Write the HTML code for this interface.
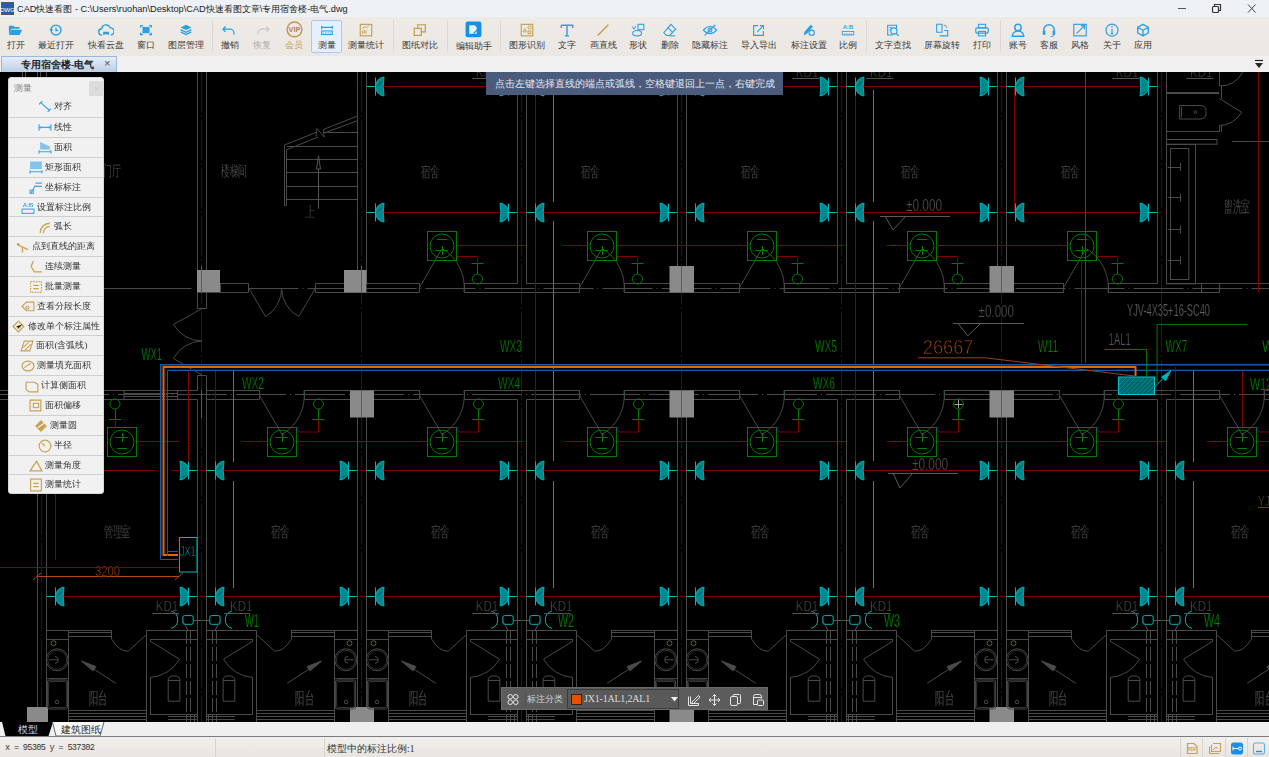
<!DOCTYPE html>
<html><head><meta charset="utf-8">
<style>
*{margin:0;padding:0;box-sizing:border-box}
html,body{width:1269px;height:757px;overflow:hidden;background:#000;font-family:"Liberation Sans",sans-serif}
#title{position:absolute;left:0;top:0;width:1269px;height:17px;background:#eef1f6;}
#title .t{position:absolute;left:17px;top:3px;font-size:9.2px;color:#222;white-space:nowrap}
#tb{position:absolute;left:0;top:17px;width:1269px;height:39px;background:linear-gradient(#eeebe7,#ebe7e2);}
#tb .lb{position:absolute;transform:translateX(-50%);font-size:9px;color:#3a3a3a;white-space:nowrap;font-family:"Liberation Serif",serif;line-height:10px}
#tb .sep{position:absolute;top:3px;width:1px;height:32px;background:#dcd8d3}
#tabs{position:absolute;left:0;top:56px;width:1269px;height:16px;background:#f0f0f0}
#tab1{position:absolute;left:1px;top:0;width:116px;height:16px;background:linear-gradient(#e6eef8,#bccfe6);border:1px solid #9ab8dc;border-bottom:none}
#tab1 .lb{position:absolute;left:19px;top:2px;font-size:9.5px;color:#222;font-weight:bold;font-family:"Liberation Serif",serif;white-space:nowrap}
#tab1 .x{position:absolute;left:102px;top:0px;font-size:11px;color:#555}
#canvas{position:absolute;left:0;top:72px;width:1269px;height:650px;background:#000;overflow:hidden;will-change:transform}
#panel{position:absolute;left:8px;top:77.3px;width:96px;height:417px;background:#f1f1f1;border-radius:3px;border:1px solid #d8d8d8}
#panel .hd{position:absolute;left:5px;top:4px;font-size:9px;color:#888}
#panel .cl{position:absolute;left:80px;top:3px;width:15px;height:15px;background:#dcdcdc;color:#c8c8c8;font-size:8px;text-align:center;line-height:15px}
#panel .row{position:absolute;left:0;width:94px;height:20px;border-top:1px solid #cfcfcf;font-size:9px;color:#333;line-height:19px;white-space:nowrap;font-family:"Liberation Serif",serif}
#btabs{position:absolute;left:0;top:722px;width:1269px;height:16px;background:#efefef}
#status{position:absolute;left:0;top:738px;width:1269px;height:19px;background:linear-gradient(#f2f0ed,#e8e4df)}
#status .t{position:absolute;top:5px;font-size:9.5px;color:#333;white-space:nowrap;font-family:"Liberation Mono",monospace}
#tip{position:absolute;left:486px;top:72px;width:297px;height:23px;background:#4b5b7c;color:#e4e8f0;font-size:10px;line-height:24px;text-align:center;font-family:"Liberation Serif",serif;white-space:nowrap}
#btool{position:absolute;left:501px;top:687px;width:267px;height:23px;background:#5c5c5c;border:1px solid #6a6a6a}
svg text{font-family:"Liberation Sans",sans-serif}
</style></head><body>
<div id="title"><svg style="position:absolute;left:1px;top:2px" width="13" height="13" viewBox="0 0 13 13"><rect x=".5" y=".5" width="12" height="12" fill="#2a5ea8" stroke="#555"/><text x="6.5" y="9.5" font-size="6" text-anchor="middle" fill="#fff" font-family="Liberation Sans">DWG</text></svg><svg style="position:absolute;left:1170px;top:1px" width="99" height="15" viewBox="0 0 99 15"><g fill="none" stroke="#333" stroke-width="1"><path d="M8 7.5H16" stroke="#555"/><rect x="42.5" y="5.5" width="6" height="6" rx="1" stroke-width="1.2"/><path d="M44.5 5V3.5H50.5V9.5H49" stroke-width="1.2"/><path d="M78 3.5L85.5 11.5M85.5 3.5L78 11.5" stroke="#444"/></g></svg><div class="t">CAD快速看图 - C:\Users\ruohan\Desktop\CAD快速看图文章\专用宿舍楼-电气.dwg</div></div>
<div id="tb">
<div style="position:absolute;left:311px;top:2.5px;width:31px;height:33px;background:#e6f0fc;border:1px solid #a9c9ee;border-radius:2px"></div>
<svg style="position:absolute;left:8.0px;top:6px" width="16" height="14.2" viewBox="0 0 18 16"><path d="M1 3h5l1.5 1.5H13v2H4L1 13z" fill="#2b9ee6"/><path d="M3.5 7.5H16L13 13.5H1z" fill="#2b9ee6"/></svg>
<div class="lb" style="left:16.0px;top:23px;color:#3a3a3a">打开</div>
<svg style="position:absolute;left:48.0px;top:6px" width="16" height="14.2" viewBox="0 0 18 16"><circle cx="9" cy="8" r="5.6" fill="none" stroke="#2b9ee6" stroke-width="1.6"/><path d="M9 5v3.5h2.5" fill="none" stroke="#2b9ee6" stroke-width="1.5"/><path d="M1.5 7l2.2 2.6L6 7z" fill="#2b9ee6"/></svg>
<div class="lb" style="left:56.0px;top:23px;color:#3a3a3a">最近打开</div>
<svg style="position:absolute;left:98.0px;top:6px" width="16" height="14.2" viewBox="0 0 18 16"><path d="M4.5 13.5a3.5 3.5 0 0 1-.4-7A5 5 0 0 1 13.8 5.5a3.8 3.8 0 0 1 .6 8" fill="none" stroke="#2b9ee6" stroke-width="1.6"/><path d="M6.5 13.5v-3h5v3M6.5 12h5" fill="none" stroke="#2b9ee6" stroke-width="1.4"/></svg>
<div class="lb" style="left:106.0px;top:23px;color:#3a3a3a">快看云盘</div>
<svg style="position:absolute;left:138.0px;top:6px" width="16" height="14.2" viewBox="0 0 18 16"><rect x="5" y="4.5" width="8" height="7" fill="#2b9ee6"/><path d="M3 5V3h2.5M12.5 3H15v2M15 11v2h-2.5M5.5 13H3v-2" fill="none" stroke="#2b9ee6" stroke-width="1.6"/></svg>
<div class="lb" style="left:146.0px;top:23px;color:#3a3a3a">窗口</div>
<svg style="position:absolute;left:178.0px;top:6px" width="16" height="14.2" viewBox="0 0 18 16"><path d="M9 2l6 3-6 3-6-3z" fill="#2b9ee6"/><path d="M3 7.5l6 3 6-3M3 10l6 3 6-3" fill="none" stroke="#2b9ee6" stroke-width="1.5"/></svg>
<div class="lb" style="left:186.0px;top:23px;color:#3a3a3a">图层管理</div>
<svg style="position:absolute;left:222.0px;top:6px" width="16" height="14.2" viewBox="0 0 18 16"><path d="M4 4l-3 3 3 3M1.5 7H9a4.5 4.5 0 0 1 4.5 4.5V13" fill="none" stroke="#2b9ee6" stroke-width="1.4"/></svg>
<div class="lb" style="left:230.0px;top:23px;color:#3a3a3a">撤销</div>
<svg style="position:absolute;left:254.0px;top:6px" width="16" height="14.2" viewBox="0 0 18 16"><path d="M14 4l3 3-3 3M16.5 7H9a4.5 4.5 0 0 0-4.5 4.5V13" fill="none" stroke="#c8c8c8" stroke-width="1.4"/></svg>
<div class="lb" style="left:262.0px;top:23px;color:#b0b0b0">恢复</div>
<svg style="position:absolute;left:284.5px;top:3.8px" width="19" height="16.9" viewBox="0 0 18 16"><circle cx="9" cy="8" r="7" fill="none" stroke="#c49a4a" stroke-width="1.4"/><text x="9" y="10.8" font-size="7" font-weight="bold" text-anchor="middle" fill="#b8862a" font-family="Liberation Serif">VIP</text></svg>
<div class="lb" style="left:294.0px;top:23px;color:#c9a060">会员</div>
<svg style="position:absolute;left:318.5px;top:6px" width="16" height="14.2" viewBox="0 0 18 16"><path d="M3 3v4M15 3v4M3 5h12" fill="none" stroke="#2b9ee6" stroke-width="1.3"/><rect x="3" y="9" width="12" height="4" fill="none" stroke="#2b9ee6" stroke-width="1.2"/><path d="M5 10.5v1.5M7 10.5v1.5M9 10.5v1.5M11 10.5v1.5M13 10.5v1.5" stroke="#2b9ee6" stroke-width=".7"/></svg>
<div class="lb" style="left:326.5px;top:23px;color:#3a3a3a">测量</div>
<svg style="position:absolute;left:358.0px;top:6px" width="16" height="14.2" viewBox="0 0 18 16"><rect x="2.5" y="1.5" width="13" height="13" fill="none" stroke="#c49a4a" stroke-width="1.2"/><path d="M5 6l2.5-2 2 1.5 3-3M5 12V9M7 12V7.5M9 12V8.5" fill="none" stroke="#c49a4a" stroke-width="1"/></svg>
<div class="lb" style="left:366.0px;top:23px;color:#3a3a3a">测量统计</div>
<svg style="position:absolute;left:412.0px;top:6px" width="16" height="14.2" viewBox="0 0 18 16"><rect x="2.5" y="6" width="8" height="8" fill="none" stroke="#c49a4a" stroke-width="1.3"/><path d="M6.5 6V2h8.5v8h-4.5" fill="none" stroke="#c49a4a" stroke-width="1.3"/></svg>
<div class="lb" style="left:420.0px;top:23px;color:#3a3a3a">图纸对比</div>
<svg style="position:absolute;left:464.0px;top:3.8px" width="19" height="16.9" viewBox="0 0 18 16"><rect x="1.5" y="0.5" width="15" height="15" rx="2" fill="#1a8fe0"/><path d="M5 4h5l2 2v6H5z" fill="#fff" opacity=".9"/><path d="M9 12l5-5" stroke="#1a8fe0" stroke-width="1.2"/></svg>
<div class="lb" style="left:473.5px;top:24px;color:#3a3a3a">编辑助手</div>
<svg style="position:absolute;left:519.0px;top:6px" width="16" height="14.2" viewBox="0 0 18 16"><rect x="2.5" y="1.5" width="13" height="13" fill="none" stroke="#c49a4a" stroke-width="1.2"/><path d="M4.5 10l2-3.5 2 3.5z" fill="none" stroke="#c49a4a" stroke-width="1"/><circle cx="12" cy="5" r="1.8" fill="none" stroke="#c49a4a" stroke-width="1"/><rect x="10.3" y="9" width="3" height="3" fill="none" stroke="#c49a4a" stroke-width="1"/></svg>
<div class="lb" style="left:527.0px;top:23px;color:#3a3a3a">图形识别</div>
<svg style="position:absolute;left:559.0px;top:6px" width="16" height="14.2" viewBox="0 0 18 16"><path d="M2.5 2.5h13v3M2.5 2.5v3M9 2.5v12M6.5 14.5h5" fill="none" stroke="#2b9ee6" stroke-width="1.6"/></svg>
<div class="lb" style="left:567.0px;top:23px;color:#3a3a3a">文字</div>
<svg style="position:absolute;left:595.0px;top:6px" width="16" height="14.2" viewBox="0 0 18 16"><path d="M3 14L15 2" stroke="#c49a4a" stroke-width="1.5"/></svg>
<div class="lb" style="left:603.0px;top:23px;color:#3a3a3a">画直线</div>
<svg style="position:absolute;left:630.0px;top:6px" width="16" height="14.2" viewBox="0 0 18 16"><rect x="9" y="1.5" width="6.5" height="6" fill="none" stroke="#2b9ee6" stroke-width="1.2"/><ellipse cx="8" cy="11.5" rx="5" ry="3" fill="none" stroke="#2b9ee6" stroke-width="1.2"/><path d="M2.5 4l2 3 2-4" fill="none" stroke="#2b9ee6" stroke-width="1.1"/></svg>
<div class="lb" style="left:638.0px;top:23px;color:#3a3a3a">形状</div>
<svg style="position:absolute;left:662.0px;top:6px" width="16" height="14.2" viewBox="0 0 18 16"><path d="M10 1.5l5.5 5.5-7 7H5L2 11z" fill="none" stroke="#2b9ee6" stroke-width="1.2"/><path d="M6.5 5l5.5 5.5" stroke="#2b9ee6" stroke-width="1.2"/><path d="M9 14.5h6" stroke="#2b9ee6" stroke-width="1.2"/></svg>
<div class="lb" style="left:670.0px;top:23px;color:#3a3a3a">删除</div>
<svg style="position:absolute;left:702.0px;top:6px" width="16" height="14.2" viewBox="0 0 18 16"><path d="M1.5 8q7.5-8 15 0q-7.5 8-15 0z" fill="none" stroke="#2b9ee6" stroke-width="1.3"/><circle cx="9" cy="8" r="2.2" fill="none" stroke="#2b9ee6" stroke-width="1.2"/><path d="M3 14L15 2" stroke="#2b9ee6" stroke-width="1.3"/></svg>
<div class="lb" style="left:710.0px;top:23px;color:#3a3a3a">隐藏标注</div>
<svg style="position:absolute;left:751.0px;top:6px" width="16" height="14.2" viewBox="0 0 18 16"><path d="M8 3H3v11h11V9" fill="none" stroke="#2b9ee6" stroke-width="1.3"/><path d="M7 10l7-7M10 3h4v4" fill="none" stroke="#2b9ee6" stroke-width="1.3"/></svg>
<div class="lb" style="left:759.0px;top:23px;color:#3a3a3a">导入导出</div>
<svg style="position:absolute;left:801.0px;top:6px" width="16" height="14.2" viewBox="0 0 18 16"><path d="M3 14l1-4 7-8 2.5 2-7 8z" fill="#2b9ee6"/><circle cx="12" cy="11" r="3" fill="none" stroke="#2b9ee6" stroke-width="1.3"/></svg>
<div class="lb" style="left:809.0px;top:23px;color:#3a3a3a">标注设置</div>
<svg style="position:absolute;left:840.0px;top:6px" width="16" height="14.2" viewBox="0 0 18 16"><text x="9" y="7" font-size="6.5" text-anchor="middle" fill="#2b9ee6" font-family="Liberation Mono" font-weight="bold">A:B</text><rect x="2.5" y="9.5" width="13" height="4" fill="none" stroke="#2b9ee6" stroke-width="1"/><path d="M5 11.5v2M7 11.5v2M9 11.5v2M11 11.5v2M13 11.5v2" stroke="#2b9ee6" stroke-width=".7"/></svg>
<div class="lb" style="left:848.0px;top:23px;color:#3a3a3a">比例</div>
<svg style="position:absolute;left:885.0px;top:6px" width="16" height="14.2" viewBox="0 0 18 16"><path d="M13 6V2.5H3v11h6" fill="none" stroke="#2b9ee6" stroke-width="1.2"/><circle cx="10" cy="9" r="3.5" fill="none" stroke="#2b9ee6" stroke-width="1.3"/><path d="M12.5 11.5l3 3" stroke="#2b9ee6" stroke-width="1.4"/><path d="M5 5h3M5 8h2" stroke="#2b9ee6" stroke-width="1"/></svg>
<div class="lb" style="left:893.0px;top:23px;color:#3a3a3a">文字查找</div>
<svg style="position:absolute;left:934.0px;top:6px" width="16" height="14.2" viewBox="0 0 18 16"><path d="M3 1.5h6v9H3z" fill="none" stroke="#2b9ee6" stroke-width="1.2"/><path d="M6.5 14.5h9v-6h-4" fill="none" stroke="#2b9ee6" stroke-width="1.2"/><path d="M11 2.5q3 0 3.5 3" fill="none" stroke="#2b9ee6" stroke-width="1"/></svg>
<div class="lb" style="left:942.0px;top:23px;color:#3a3a3a">屏幕旋转</div>
<svg style="position:absolute;left:974.0px;top:6px" width="16" height="14.2" viewBox="0 0 18 16"><rect x="5" y="1.5" width="8" height="4" fill="none" stroke="#2b9ee6" stroke-width="1.2"/><rect x="2" y="5.5" width="14" height="6" rx="1.5" fill="none" stroke="#2b9ee6" stroke-width="1.4"/><rect x="5" y="9.5" width="8" height="5" fill="none" stroke="#2b9ee6" stroke-width="1.2"/></svg>
<div class="lb" style="left:982.0px;top:23px;color:#3a3a3a">打印</div>
<svg style="position:absolute;left:1009.5px;top:6px" width="16" height="14.2" viewBox="0 0 18 16"><circle cx="9" cy="5" r="3.6" fill="none" stroke="#2b9ee6" stroke-width="1.6"/><path d="M2.5 15a6.5 6 0 0 1 13 0z" fill="none" stroke="#2b9ee6" stroke-width="1.6"/></svg>
<div class="lb" style="left:1017.5px;top:23px;color:#3a3a3a">账号</div>
<svg style="position:absolute;left:1041.0px;top:6px" width="16" height="14.2" viewBox="0 0 18 16"><path d="M3 10V8a6 6 0 0 1 12 0v2" fill="none" stroke="#2b9ee6" stroke-width="1.6"/><rect x="2" y="8.5" width="3" height="5" rx="1" fill="#2b9ee6"/><rect x="13" y="8.5" width="3" height="5" rx="1" fill="#2b9ee6"/><path d="M14.5 13.5q0 2-4 2" fill="none" stroke="#2b9ee6" stroke-width="1"/></svg>
<div class="lb" style="left:1049.0px;top:23px;color:#3a3a3a">客服</div>
<svg style="position:absolute;left:1072.0px;top:6px" width="16" height="14.2" viewBox="0 0 18 16"><rect x="2" y="1.5" width="14" height="13" fill="none" stroke="#2b9ee6" stroke-width="1.3"/><path d="M5 12L14 3M10 3h4v4" fill="none" stroke="#2b9ee6" stroke-width="1.3"/></svg>
<div class="lb" style="left:1080.0px;top:23px;color:#3a3a3a">风格</div>
<svg style="position:absolute;left:1103.6px;top:6px" width="16" height="14.2" viewBox="0 0 18 16"><circle cx="9" cy="8" r="6.8" fill="none" stroke="#2b9ee6" stroke-width="1.3"/><path d="M9 6.5v5.5M7.5 12h3" stroke="#2b9ee6" stroke-width="1.3"/><circle cx="9" cy="4.3" r=".9" fill="#2b9ee6"/></svg>
<div class="lb" style="left:1111.6px;top:23px;color:#3a3a3a">关于</div>
<svg style="position:absolute;left:1134.7px;top:6px" width="16" height="14.2" viewBox="0 0 18 16"><path d="M9 1.5l6 3.3v6.5L9 14.5 3 11.3V4.8z M3 4.8l6 3.4 6-3.4M9 8.2v6.3" fill="none" stroke="#2b9ee6" stroke-width="1.5" stroke-linejoin="round"/></svg>
<div class="lb" style="left:1142.7px;top:23px;color:#3a3a3a">应用</div>
<div class="sep" style="left:212px"></div>
<div class="sep" style="left:393px"></div>
<div class="sep" style="left:447px"></div>
<div class="sep" style="left:500px"></div>
<div class="sep" style="left:866px"></div>
<div class="sep" style="left:1000px"></div>
</div>
<div id="tabs"><div id="tab1"><span class="lb">专用宿舍楼-电气</span><span class="x">×</span></div><svg style="position:absolute;left:1254px;top:3px" width="10" height="10" viewBox="0 0 10 10"><path d="M1 1.5H9" stroke="#222" stroke-width="1.2"/><path d="M1 4H9L5 9Z" fill="#222"/></svg></div>
<div id="canvas"><svg width="1269" height="650" viewBox="0 72 1269 650" style="position:absolute;left:0;top:0">
<line x1="197.5" y1="72" x2="197.5" y2="283.5" stroke="#4a4a4a" stroke-width="1" />
<line x1="206.5" y1="72" x2="206.5" y2="283.5" stroke="#4a4a4a" stroke-width="1" />
<line x1="197.5" y1="399.5" x2="197.5" y2="722" stroke="#4a4a4a" stroke-width="1" />
<line x1="206.5" y1="399.5" x2="206.5" y2="722" stroke="#4a4a4a" stroke-width="1" />
<line x1="357.5" y1="72" x2="357.5" y2="283.5" stroke="#4a4a4a" stroke-width="1" />
<line x1="366.5" y1="72" x2="366.5" y2="283.5" stroke="#4a4a4a" stroke-width="1" />
<line x1="357.5" y1="399.5" x2="357.5" y2="722" stroke="#4a4a4a" stroke-width="1" />
<line x1="366.5" y1="399.5" x2="366.5" y2="722" stroke="#4a4a4a" stroke-width="1" />
<line x1="517.5" y1="72" x2="517.5" y2="283.5" stroke="#4a4a4a" stroke-width="1" />
<line x1="526.5" y1="72" x2="526.5" y2="283.5" stroke="#4a4a4a" stroke-width="1" />
<line x1="517.5" y1="399.5" x2="517.5" y2="722" stroke="#4a4a4a" stroke-width="1" />
<line x1="526.5" y1="399.5" x2="526.5" y2="722" stroke="#4a4a4a" stroke-width="1" />
<line x1="677.5" y1="72" x2="677.5" y2="283.5" stroke="#4a4a4a" stroke-width="1" />
<line x1="686.5" y1="72" x2="686.5" y2="283.5" stroke="#4a4a4a" stroke-width="1" />
<line x1="677.5" y1="399.5" x2="677.5" y2="722" stroke="#4a4a4a" stroke-width="1" />
<line x1="686.5" y1="399.5" x2="686.5" y2="722" stroke="#4a4a4a" stroke-width="1" />
<line x1="837.5" y1="72" x2="837.5" y2="283.5" stroke="#4a4a4a" stroke-width="1" />
<line x1="846.5" y1="72" x2="846.5" y2="283.5" stroke="#4a4a4a" stroke-width="1" />
<line x1="837.5" y1="399.5" x2="837.5" y2="722" stroke="#4a4a4a" stroke-width="1" />
<line x1="846.5" y1="399.5" x2="846.5" y2="722" stroke="#4a4a4a" stroke-width="1" />
<line x1="997.5" y1="72" x2="997.5" y2="283.5" stroke="#4a4a4a" stroke-width="1" />
<line x1="1006.5" y1="72" x2="1006.5" y2="283.5" stroke="#4a4a4a" stroke-width="1" />
<line x1="997.5" y1="399.5" x2="997.5" y2="722" stroke="#4a4a4a" stroke-width="1" />
<line x1="1006.5" y1="399.5" x2="1006.5" y2="722" stroke="#4a4a4a" stroke-width="1" />
<line x1="1157.5" y1="72" x2="1157.5" y2="283.5" stroke="#4a4a4a" stroke-width="1" />
<line x1="1166.5" y1="72" x2="1166.5" y2="283.5" stroke="#4a4a4a" stroke-width="1" />
<line x1="1157.5" y1="399.5" x2="1157.5" y2="722" stroke="#4a4a4a" stroke-width="1" />
<line x1="1166.5" y1="399.5" x2="1166.5" y2="722" stroke="#4a4a4a" stroke-width="1" />
<line x1="37.5" y1="399.5" x2="37.5" y2="722" stroke="#4a4a4a" stroke-width="1" />
<line x1="46.5" y1="399.5" x2="46.5" y2="722" stroke="#4a4a4a" stroke-width="1" />
<line x1="41.5" y1="399" x2="41.5" y2="722" stroke="#1c1c1c" stroke-width="1" stroke-dasharray="40 3 2 3"/>
<line x1="201.5" y1="72" x2="201.5" y2="722" stroke="#1c1c1c" stroke-width="1" stroke-dasharray="40 3 2 3"/>
<line x1="361.5" y1="72" x2="361.5" y2="722" stroke="#1c1c1c" stroke-width="1" stroke-dasharray="40 3 2 3"/>
<line x1="521.5" y1="72" x2="521.5" y2="722" stroke="#1c1c1c" stroke-width="1" stroke-dasharray="40 3 2 3"/>
<line x1="681.5" y1="72" x2="681.5" y2="722" stroke="#1c1c1c" stroke-width="1" stroke-dasharray="40 3 2 3"/>
<line x1="841.5" y1="72" x2="841.5" y2="722" stroke="#1c1c1c" stroke-width="1" stroke-dasharray="40 3 2 3"/>
<line x1="1001.5" y1="72" x2="1001.5" y2="722" stroke="#1c1c1c" stroke-width="1" stroke-dasharray="40 3 2 3"/>
<line x1="1161.5" y1="72" x2="1161.5" y2="722" stroke="#1c1c1c" stroke-width="1" stroke-dasharray="40 3 2 3"/>
<path d="M197.5 292.5V308.5H206.5V292.5" stroke="#4a4a4a" stroke-width="1" fill="none" />
<path d="M197.5 390.5V375.5H206.5V390.5" stroke="#4a4a4a" stroke-width="1" fill="none" />
<line x1="104" y1="288.5" x2="191.5" y2="288.5" stroke="#4a4a4a" stroke-width="1" />
<line x1="220" y1="283.5" x2="248.5" y2="283.5" stroke="#4a4a4a" stroke-width="1" />
<line x1="220" y1="292.5" x2="248.5" y2="292.5" stroke="#4a4a4a" stroke-width="1" />
<line x1="220.5" y1="283.5" x2="220.5" y2="292.5" stroke="#4a4a4a" stroke-width="1" />
<line x1="248.5" y1="283.5" x2="248.5" y2="292.5" stroke="#4a4a4a" stroke-width="1" />
<line x1="315.5" y1="283.5" x2="357.5" y2="283.5" stroke="#4a4a4a" stroke-width="1" />
<line x1="366.5" y1="283.5" x2="419.5" y2="283.5" stroke="#4a4a4a" stroke-width="1" />
<line x1="315.5" y1="292.5" x2="419.5" y2="292.5" stroke="#4a4a4a" stroke-width="1" />
<line x1="315.5" y1="283.5" x2="315.5" y2="292.5" stroke="#4a4a4a" stroke-width="1" />
<line x1="419.5" y1="283.5" x2="419.5" y2="292.5" stroke="#4a4a4a" stroke-width="1" />
<line x1="464.5" y1="283.5" x2="517.5" y2="283.5" stroke="#4a4a4a" stroke-width="1" />
<line x1="526.5" y1="283.5" x2="579.5" y2="283.5" stroke="#4a4a4a" stroke-width="1" />
<line x1="464.5" y1="292.5" x2="579.5" y2="292.5" stroke="#4a4a4a" stroke-width="1" />
<line x1="464.5" y1="283.5" x2="464.5" y2="292.5" stroke="#4a4a4a" stroke-width="1" />
<line x1="579.5" y1="283.5" x2="579.5" y2="292.5" stroke="#4a4a4a" stroke-width="1" />
<line x1="624.5" y1="283.5" x2="677.5" y2="283.5" stroke="#4a4a4a" stroke-width="1" />
<line x1="686.5" y1="283.5" x2="739.5" y2="283.5" stroke="#4a4a4a" stroke-width="1" />
<line x1="624.5" y1="292.5" x2="739.5" y2="292.5" stroke="#4a4a4a" stroke-width="1" />
<line x1="624.5" y1="283.5" x2="624.5" y2="292.5" stroke="#4a4a4a" stroke-width="1" />
<line x1="739.5" y1="283.5" x2="739.5" y2="292.5" stroke="#4a4a4a" stroke-width="1" />
<line x1="784.5" y1="283.5" x2="837.5" y2="283.5" stroke="#4a4a4a" stroke-width="1" />
<line x1="846.5" y1="283.5" x2="899.5" y2="283.5" stroke="#4a4a4a" stroke-width="1" />
<line x1="784.5" y1="292.5" x2="899.5" y2="292.5" stroke="#4a4a4a" stroke-width="1" />
<line x1="784.5" y1="283.5" x2="784.5" y2="292.5" stroke="#4a4a4a" stroke-width="1" />
<line x1="899.5" y1="283.5" x2="899.5" y2="292.5" stroke="#4a4a4a" stroke-width="1" />
<line x1="944.5" y1="283.5" x2="997.5" y2="283.5" stroke="#4a4a4a" stroke-width="1" />
<line x1="1006.5" y1="283.5" x2="1063.5" y2="283.5" stroke="#4a4a4a" stroke-width="1" />
<line x1="944.5" y1="292.5" x2="1063.5" y2="292.5" stroke="#4a4a4a" stroke-width="1" />
<line x1="944.5" y1="283.5" x2="944.5" y2="292.5" stroke="#4a4a4a" stroke-width="1" />
<line x1="1063.5" y1="283.5" x2="1063.5" y2="292.5" stroke="#4a4a4a" stroke-width="1" />
<line x1="1108.5" y1="283.5" x2="1157.5" y2="283.5" stroke="#4a4a4a" stroke-width="1" />
<line x1="1166.5" y1="283.5" x2="1219.5" y2="283.5" stroke="#4a4a4a" stroke-width="1" />
<line x1="1108.5" y1="292.5" x2="1219.5" y2="292.5" stroke="#4a4a4a" stroke-width="1" />
<line x1="1108.5" y1="283.5" x2="1108.5" y2="292.5" stroke="#4a4a4a" stroke-width="1" />
<line x1="1219.5" y1="283.5" x2="1219.5" y2="292.5" stroke="#4a4a4a" stroke-width="1" />
<line x1="248.5" y1="288.5" x2="1269" y2="288.5" stroke="#4a4a4a" stroke-width="1" stroke-dasharray="50 4 1 4"/>
<line x1="0" y1="390.5" x2="124" y2="390.5" stroke="#4a4a4a" stroke-width="1" />
<line x1="0" y1="399.5" x2="37.5" y2="399.5" stroke="#4a4a4a" stroke-width="1" />
<line x1="46.5" y1="399.5" x2="124" y2="399.5" stroke="#4a4a4a" stroke-width="1" />
<rect x="124" y="390.5" width="53.5" height="9" stroke="#4a4a4a" stroke-width="1" fill="none" />
<line x1="124" y1="393.5" x2="177.5" y2="393.5" stroke="#4a4a4a" stroke-width="1" />
<line x1="124" y1="396.5" x2="177.5" y2="396.5" stroke="#4a4a4a" stroke-width="1" />
<line x1="177.5" y1="390.5" x2="197.5" y2="390.5" stroke="#4a4a4a" stroke-width="1" />
<line x1="177.5" y1="399.5" x2="197.5" y2="399.5" stroke="#4a4a4a" stroke-width="1" />
<line x1="206.5" y1="399.5" x2="259.5" y2="399.5" stroke="#4a4a4a" stroke-width="1" />
<line x1="206.5" y1="390.5" x2="259.5" y2="390.5" stroke="#4a4a4a" stroke-width="1" />
<line x1="206.5" y1="390.5" x2="206.5" y2="399.5" stroke="#4a4a4a" stroke-width="1" />
<line x1="259.5" y1="390.5" x2="259.5" y2="399.5" stroke="#4a4a4a" stroke-width="1" />
<line x1="304.5" y1="399.5" x2="357.5" y2="399.5" stroke="#4a4a4a" stroke-width="1" />
<line x1="366.5" y1="399.5" x2="419.5" y2="399.5" stroke="#4a4a4a" stroke-width="1" />
<line x1="304.5" y1="390.5" x2="419.5" y2="390.5" stroke="#4a4a4a" stroke-width="1" />
<line x1="304.5" y1="390.5" x2="304.5" y2="399.5" stroke="#4a4a4a" stroke-width="1" />
<line x1="419.5" y1="390.5" x2="419.5" y2="399.5" stroke="#4a4a4a" stroke-width="1" />
<line x1="464.5" y1="399.5" x2="517.5" y2="399.5" stroke="#4a4a4a" stroke-width="1" />
<line x1="526.5" y1="399.5" x2="579.5" y2="399.5" stroke="#4a4a4a" stroke-width="1" />
<line x1="464.5" y1="390.5" x2="579.5" y2="390.5" stroke="#4a4a4a" stroke-width="1" />
<line x1="464.5" y1="390.5" x2="464.5" y2="399.5" stroke="#4a4a4a" stroke-width="1" />
<line x1="579.5" y1="390.5" x2="579.5" y2="399.5" stroke="#4a4a4a" stroke-width="1" />
<line x1="624.5" y1="399.5" x2="677.5" y2="399.5" stroke="#4a4a4a" stroke-width="1" />
<line x1="686.5" y1="399.5" x2="739.5" y2="399.5" stroke="#4a4a4a" stroke-width="1" />
<line x1="624.5" y1="390.5" x2="739.5" y2="390.5" stroke="#4a4a4a" stroke-width="1" />
<line x1="624.5" y1="390.5" x2="624.5" y2="399.5" stroke="#4a4a4a" stroke-width="1" />
<line x1="739.5" y1="390.5" x2="739.5" y2="399.5" stroke="#4a4a4a" stroke-width="1" />
<line x1="784.5" y1="399.5" x2="837.5" y2="399.5" stroke="#4a4a4a" stroke-width="1" />
<line x1="846.5" y1="399.5" x2="899.5" y2="399.5" stroke="#4a4a4a" stroke-width="1" />
<line x1="784.5" y1="390.5" x2="899.5" y2="390.5" stroke="#4a4a4a" stroke-width="1" />
<line x1="784.5" y1="390.5" x2="784.5" y2="399.5" stroke="#4a4a4a" stroke-width="1" />
<line x1="899.5" y1="390.5" x2="899.5" y2="399.5" stroke="#4a4a4a" stroke-width="1" />
<line x1="944.5" y1="399.5" x2="997.5" y2="399.5" stroke="#4a4a4a" stroke-width="1" />
<line x1="1006.5" y1="399.5" x2="1059.5" y2="399.5" stroke="#4a4a4a" stroke-width="1" />
<line x1="944.5" y1="390.5" x2="1059.5" y2="390.5" stroke="#4a4a4a" stroke-width="1" />
<line x1="944.5" y1="390.5" x2="944.5" y2="399.5" stroke="#4a4a4a" stroke-width="1" />
<line x1="1059.5" y1="390.5" x2="1059.5" y2="399.5" stroke="#4a4a4a" stroke-width="1" />
<line x1="1104.5" y1="399.5" x2="1157.5" y2="399.5" stroke="#4a4a4a" stroke-width="1" />
<line x1="1166.5" y1="399.5" x2="1219.5" y2="399.5" stroke="#4a4a4a" stroke-width="1" />
<line x1="1104.5" y1="390.5" x2="1219.5" y2="390.5" stroke="#4a4a4a" stroke-width="1" />
<line x1="1104.5" y1="390.5" x2="1104.5" y2="399.5" stroke="#4a4a4a" stroke-width="1" />
<line x1="1219.5" y1="390.5" x2="1219.5" y2="399.5" stroke="#4a4a4a" stroke-width="1" />
<line x1="1264.5" y1="399.5" x2="1269" y2="399.5" stroke="#4a4a4a" stroke-width="1" />
<line x1="1264.5" y1="390.5" x2="1269" y2="390.5" stroke="#4a4a4a" stroke-width="1" />
<line x1="1264.5" y1="390.5" x2="1264.5" y2="399.5" stroke="#4a4a4a" stroke-width="1" />
<line x1="1269.5" y1="390.5" x2="1269.5" y2="399.5" stroke="#4a4a4a" stroke-width="1" />
<line x1="0" y1="394.5" x2="1269" y2="394.5" stroke="#4a4a4a" stroke-width="1" stroke-dasharray="50 4 1 4"/>
<rect x="197" y="270" width="23" height="22.5" fill="#8a8a8a"/>
<rect x="344" y="270" width="22.5" height="22.5" fill="#8a8a8a"/>
<rect x="669.5" y="266" width="24.5" height="26.5" fill="#8a8a8a"/>
<rect x="989.5" y="266" width="24.5" height="26.5" fill="#8a8a8a"/>
<rect x="350" y="390.5" width="24" height="27" fill="#8a8a8a"/>
<rect x="669.5" y="390.5" width="24.5" height="27" fill="#8a8a8a"/>
<rect x="989.5" y="390.5" width="24.5" height="27" fill="#8a8a8a"/>
<rect x="27" y="707" width="21" height="15" fill="#8a8a8a"/>
<rect x="350" y="707" width="24" height="15" fill="#8a8a8a"/>
<rect x="669.5" y="707" width="24.5" height="15" fill="#8a8a8a"/>
<rect x="989.5" y="707" width="24.5" height="15" fill="#8a8a8a"/>
<line x1="201.5" y1="266" x2="201.5" y2="293" stroke="#5a5a5a" stroke-width="1" />
<line x1="201.5" y1="390" x2="201.5" y2="418" stroke="#5a5a5a" stroke-width="1" />
<line x1="361.5" y1="266" x2="361.5" y2="293" stroke="#5a5a5a" stroke-width="1" />
<line x1="361.5" y1="390" x2="361.5" y2="418" stroke="#5a5a5a" stroke-width="1" />
<line x1="681.5" y1="266" x2="681.5" y2="293" stroke="#5a5a5a" stroke-width="1" />
<line x1="681.5" y1="390" x2="681.5" y2="418" stroke="#5a5a5a" stroke-width="1" />
<line x1="1001.5" y1="266" x2="1001.5" y2="293" stroke="#5a5a5a" stroke-width="1" />
<line x1="1001.5" y1="390" x2="1001.5" y2="418" stroke="#5a5a5a" stroke-width="1" />
<path d="M249 288.5L265.6 316.6A32.6 32.6 0 0 0 281.6 288.5" stroke="#484848" stroke-width="1" fill="none" />
<path d="M315.3 288.5L298.7 316.6A32.6 32.6 0 0 1 281.6 288.5" stroke="#484848" stroke-width="1" fill="none" />
<path d="M202 308.5L173.5 324.5A33 33 0 0 0 202 341" stroke="#484848" stroke-width="1" fill="none" />
<path d="M202 375L173.5 358.5A33 33 0 0 1 202 341" stroke="#484848" stroke-width="1" fill="none" />
<line x1="419" y1="288.5" x2="442" y2="248.5" stroke="#484848" stroke-width="1" />
<path d="M442 248.5 A45 45 0 0 1 464 292.5" stroke="#484848" stroke-width="1" fill="none" />
<line x1="579" y1="288.5" x2="602" y2="248.5" stroke="#484848" stroke-width="1" />
<path d="M602 248.5 A45 45 0 0 1 624 292.5" stroke="#484848" stroke-width="1" fill="none" />
<line x1="739" y1="288.5" x2="762" y2="248.5" stroke="#484848" stroke-width="1" />
<path d="M762 248.5 A45 45 0 0 1 784 292.5" stroke="#484848" stroke-width="1" fill="none" />
<line x1="899" y1="288.5" x2="922" y2="248.5" stroke="#484848" stroke-width="1" />
<path d="M922 248.5 A45 45 0 0 1 944 292.5" stroke="#484848" stroke-width="1" fill="none" />
<line x1="1063" y1="288.5" x2="1086" y2="248.5" stroke="#484848" stroke-width="1" />
<path d="M1086 248.5 A45 45 0 0 1 1108 292.5" stroke="#484848" stroke-width="1" fill="none" />
<line x1="259" y1="394.5" x2="282" y2="434.5" stroke="#484848" stroke-width="1" />
<path d="M282 434.5 A45 45 0 0 0 304 390.5" stroke="#484848" stroke-width="1" fill="none" />
<line x1="419" y1="394.5" x2="442" y2="434.5" stroke="#484848" stroke-width="1" />
<path d="M442 434.5 A45 45 0 0 0 464 390.5" stroke="#484848" stroke-width="1" fill="none" />
<line x1="579" y1="394.5" x2="602" y2="434.5" stroke="#484848" stroke-width="1" />
<path d="M602 434.5 A45 45 0 0 0 624 390.5" stroke="#484848" stroke-width="1" fill="none" />
<line x1="739" y1="394.5" x2="762" y2="434.5" stroke="#484848" stroke-width="1" />
<path d="M762 434.5 A45 45 0 0 0 784 390.5" stroke="#484848" stroke-width="1" fill="none" />
<line x1="899" y1="394.5" x2="922" y2="434.5" stroke="#484848" stroke-width="1" />
<path d="M922 434.5 A45 45 0 0 0 944 390.5" stroke="#484848" stroke-width="1" fill="none" />
<line x1="1059" y1="394.5" x2="1082" y2="434.5" stroke="#484848" stroke-width="1" />
<path d="M1082 434.5 A45 45 0 0 0 1104 390.5" stroke="#484848" stroke-width="1" fill="none" />
<line x1="1219" y1="394.5" x2="1242" y2="434.5" stroke="#484848" stroke-width="1" />
<path d="M1242 434.5 A45 45 0 0 0 1264 390.5" stroke="#484848" stroke-width="1" fill="none" />
<line x1="287" y1="146.5" x2="357.5" y2="146.5" stroke="#4a4a4a" stroke-width="1" />
<line x1="287" y1="159.5" x2="357.5" y2="159.5" stroke="#4a4a4a" stroke-width="1" />
<line x1="287" y1="172.5" x2="357.5" y2="172.5" stroke="#4a4a4a" stroke-width="1" />
<line x1="287" y1="186.5" x2="357.5" y2="186.5" stroke="#4a4a4a" stroke-width="1" />
<line x1="287" y1="199.5" x2="357.5" y2="199.5" stroke="#4a4a4a" stroke-width="1" />
<line x1="323" y1="132.5" x2="357.5" y2="132.5" stroke="#4a4a4a" stroke-width="1" />
<path d="M284.5 145V205.5H286.5V149.8" stroke="#4a4a4a" stroke-width="1" fill="none" />
<path d="M284.5 145L317 132M323.5 129.5L357.5 116" stroke="#4a4a4a" stroke-width="1" fill="none" />
<path d="M286.5 149.8L318 137M325 132.8L357.5 120.6" stroke="#4a4a4a" stroke-width="1" fill="none" />
<path d="M316 136.5L317 128.4L324 137L323.5 129.5" stroke="#4a4a4a" stroke-width="1" fill="none" />
<line x1="318.5" y1="169" x2="318.5" y2="208.6" stroke="#555" stroke-width="1" />
<path d="M318.5 155.8L316.5 169H320.5Z" stroke="#555" stroke-width="1" fill="none" />
<text transform="translate(310 217) scale(0.7 1)" fill="#555" font-size="15" text-anchor="middle" stroke="#000" stroke-width="0.35">上</text>
<text transform="translate(234 176) scale(0.6 1)" fill="#666666" font-size="15" text-anchor="middle" stroke="#000" stroke-width="0.35">楼梯间</text>
<text transform="translate(112 176) scale(0.6 1)" fill="#666666" font-size="15" text-anchor="middle" stroke="#000" stroke-width="0.35">门厅</text>
<line x1="535.5" y1="86" x2="535.5" y2="596" stroke="#820000" stroke-width="1" />
<line x1="855.5" y1="86" x2="855.5" y2="596" stroke="#820000" stroke-width="1" />
<line x1="1014.5" y1="86" x2="1014.5" y2="212.5" stroke="#820000" stroke-width="1" />
<line x1="1081.5" y1="261" x2="1081.5" y2="364" stroke="#820000" stroke-width="1" />
<line x1="1242.5" y1="370" x2="1242.5" y2="427" stroke="#820000" stroke-width="1" />
<line x1="1175.5" y1="367" x2="1175.5" y2="596" stroke="#820000" stroke-width="1" />
<line x1="1193.5" y1="370" x2="1193.5" y2="462" stroke="#6c6c6c" stroke-width="1" />
<line x1="1193.5" y1="481" x2="1193.5" y2="588" stroke="#6c6c6c" stroke-width="1" />
<text x="1258" y="506" font-size="15.09" fill="#5a5a5a" textLength="12" lengthAdjust="spacingAndGlyphs" font-family="Liberation Sans" stroke="#000" stroke-width="0.55">YJ</text>
<line x1="1258" y1="507.5" x2="1269" y2="507.5" stroke="#007c00" stroke-width="1" />
<line x1="1258.5" y1="72" x2="1258.5" y2="292" stroke="#820000" stroke-width="1" />
<line x1="188.5" y1="370" x2="188.5" y2="462" stroke="#820000" stroke-width="1" />
<line x1="215.5" y1="370" x2="215.5" y2="596" stroke="#820000" stroke-width="1" />
<line x1="55.5" y1="490" x2="55.5" y2="560" stroke="#820000" stroke-width="1" />
<line x1="553.5" y1="90" x2="553.5" y2="202" stroke="#6c6c6c" stroke-width="1" />
<line x1="553.5" y1="221" x2="553.5" y2="461" stroke="#6c6c6c" stroke-width="1" />
<line x1="553.5" y1="481" x2="553.5" y2="588" stroke="#6c6c6c" stroke-width="1" />
<line x1="873.5" y1="90" x2="873.5" y2="202" stroke="#6c6c6c" stroke-width="1" />
<line x1="873.5" y1="221" x2="873.5" y2="461" stroke="#6c6c6c" stroke-width="1" />
<line x1="873.5" y1="481" x2="873.5" y2="588" stroke="#6c6c6c" stroke-width="1" />
<line x1="233.5" y1="370" x2="233.5" y2="462" stroke="#6c6c6c" stroke-width="1" />
<line x1="233.5" y1="481" x2="233.5" y2="588" stroke="#6c6c6c" stroke-width="1" />
<line x1="1085.5" y1="72" x2="1085.5" y2="363" stroke="#007c00" stroke-width="1" />
<line x1="382" y1="86.5" x2="500" y2="86.5" stroke="#820000" stroke-width="1" />
<path d="M384.0 77.0 A9.55 9.55 0 0 0 384.0 96.0 Q382.5 86.5 384.0 77.0Z" fill="#008a8e" stroke="#00b8c0" stroke-width=".9"/>
<line x1="375.5" y1="77.5" x2="375.5" y2="95.5" stroke="#00b4bc" stroke-width="1" />
<line x1="376.5" y1="86.5" x2="382.5" y2="81.5" stroke="#004a50" stroke-width="0.8" />
<line x1="366.5" y1="86.5" x2="375" y2="86.5" stroke="#00b4bc" stroke-width="1" />
<path d="M500.0 77.0 A9.55 9.55 0 0 1 500.0 96.0 Q501.5 86.5 500.0 77.0Z" fill="#008a8e" stroke="#00b8c0" stroke-width=".9"/>
<line x1="508.5" y1="77.5" x2="508.5" y2="95.5" stroke="#00b4bc" stroke-width="1" />
<line x1="502.5" y1="93.5" x2="506.5" y2="90.5" stroke="#004a50" stroke-width="0.8" />
<line x1="508" y1="86.5" x2="517" y2="86.5" stroke="#00b4bc" stroke-width="1" />
<line x1="382" y1="212.5" x2="500" y2="212.5" stroke="#820000" stroke-width="1" />
<path d="M384.0 203.0 A9.55 9.55 0 0 0 384.0 222.0 Q382.5 212.5 384.0 203.0Z" fill="#008a8e" stroke="#00b8c0" stroke-width=".9"/>
<line x1="375.5" y1="203.5" x2="375.5" y2="221.5" stroke="#00b4bc" stroke-width="1" />
<line x1="376.5" y1="212.5" x2="382.5" y2="207.5" stroke="#004a50" stroke-width="0.8" />
<line x1="366.5" y1="212.5" x2="375" y2="212.5" stroke="#00b4bc" stroke-width="1" />
<path d="M500.0 203.0 A9.55 9.55 0 0 1 500.0 222.0 Q501.5 212.5 500.0 203.0Z" fill="#008a8e" stroke="#00b8c0" stroke-width=".9"/>
<line x1="508.5" y1="203.5" x2="508.5" y2="221.5" stroke="#00b4bc" stroke-width="1" />
<line x1="502.5" y1="219.5" x2="506.5" y2="216.5" stroke="#004a50" stroke-width="0.8" />
<line x1="508" y1="212.5" x2="517" y2="212.5" stroke="#00b4bc" stroke-width="1" />
<line x1="542" y1="86.5" x2="660" y2="86.5" stroke="#820000" stroke-width="1" />
<path d="M544.0 77.0 A9.55 9.55 0 0 0 544.0 96.0 Q542.5 86.5 544.0 77.0Z" fill="#008a8e" stroke="#00b8c0" stroke-width=".9"/>
<line x1="535.5" y1="77.5" x2="535.5" y2="95.5" stroke="#00b4bc" stroke-width="1" />
<line x1="536.5" y1="86.5" x2="542.5" y2="81.5" stroke="#004a50" stroke-width="0.8" />
<line x1="526.5" y1="86.5" x2="535" y2="86.5" stroke="#00b4bc" stroke-width="1" />
<path d="M660.0 77.0 A9.55 9.55 0 0 1 660.0 96.0 Q661.5 86.5 660.0 77.0Z" fill="#008a8e" stroke="#00b8c0" stroke-width=".9"/>
<line x1="668.5" y1="77.5" x2="668.5" y2="95.5" stroke="#00b4bc" stroke-width="1" />
<line x1="662.5" y1="93.5" x2="666.5" y2="90.5" stroke="#004a50" stroke-width="0.8" />
<line x1="668" y1="86.5" x2="677" y2="86.5" stroke="#00b4bc" stroke-width="1" />
<line x1="542" y1="212.5" x2="660" y2="212.5" stroke="#820000" stroke-width="1" />
<path d="M544.0 203.0 A9.55 9.55 0 0 0 544.0 222.0 Q542.5 212.5 544.0 203.0Z" fill="#008a8e" stroke="#00b8c0" stroke-width=".9"/>
<line x1="535.5" y1="203.5" x2="535.5" y2="221.5" stroke="#00b4bc" stroke-width="1" />
<line x1="536.5" y1="212.5" x2="542.5" y2="207.5" stroke="#004a50" stroke-width="0.8" />
<line x1="526.5" y1="212.5" x2="535" y2="212.5" stroke="#00b4bc" stroke-width="1" />
<path d="M660.0 203.0 A9.55 9.55 0 0 1 660.0 222.0 Q661.5 212.5 660.0 203.0Z" fill="#008a8e" stroke="#00b8c0" stroke-width=".9"/>
<line x1="668.5" y1="203.5" x2="668.5" y2="221.5" stroke="#00b4bc" stroke-width="1" />
<line x1="662.5" y1="219.5" x2="666.5" y2="216.5" stroke="#004a50" stroke-width="0.8" />
<line x1="668" y1="212.5" x2="677" y2="212.5" stroke="#00b4bc" stroke-width="1" />
<line x1="702" y1="86.5" x2="820" y2="86.5" stroke="#820000" stroke-width="1" />
<path d="M704.0 77.0 A9.55 9.55 0 0 0 704.0 96.0 Q702.5 86.5 704.0 77.0Z" fill="#008a8e" stroke="#00b8c0" stroke-width=".9"/>
<line x1="695.5" y1="77.5" x2="695.5" y2="95.5" stroke="#00b4bc" stroke-width="1" />
<line x1="696.5" y1="86.5" x2="702.5" y2="81.5" stroke="#004a50" stroke-width="0.8" />
<line x1="686.5" y1="86.5" x2="695" y2="86.5" stroke="#00b4bc" stroke-width="1" />
<path d="M820.0 77.0 A9.55 9.55 0 0 1 820.0 96.0 Q821.5 86.5 820.0 77.0Z" fill="#008a8e" stroke="#00b8c0" stroke-width=".9"/>
<line x1="828.5" y1="77.5" x2="828.5" y2="95.5" stroke="#00b4bc" stroke-width="1" />
<line x1="822.5" y1="93.5" x2="826.5" y2="90.5" stroke="#004a50" stroke-width="0.8" />
<line x1="828" y1="86.5" x2="837" y2="86.5" stroke="#00b4bc" stroke-width="1" />
<line x1="702" y1="212.5" x2="820" y2="212.5" stroke="#820000" stroke-width="1" />
<path d="M704.0 203.0 A9.55 9.55 0 0 0 704.0 222.0 Q702.5 212.5 704.0 203.0Z" fill="#008a8e" stroke="#00b8c0" stroke-width=".9"/>
<line x1="695.5" y1="203.5" x2="695.5" y2="221.5" stroke="#00b4bc" stroke-width="1" />
<line x1="696.5" y1="212.5" x2="702.5" y2="207.5" stroke="#004a50" stroke-width="0.8" />
<line x1="686.5" y1="212.5" x2="695" y2="212.5" stroke="#00b4bc" stroke-width="1" />
<path d="M820.0 203.0 A9.55 9.55 0 0 1 820.0 222.0 Q821.5 212.5 820.0 203.0Z" fill="#008a8e" stroke="#00b8c0" stroke-width=".9"/>
<line x1="828.5" y1="203.5" x2="828.5" y2="221.5" stroke="#00b4bc" stroke-width="1" />
<line x1="822.5" y1="219.5" x2="826.5" y2="216.5" stroke="#004a50" stroke-width="0.8" />
<line x1="828" y1="212.5" x2="837" y2="212.5" stroke="#00b4bc" stroke-width="1" />
<line x1="862" y1="86.5" x2="980" y2="86.5" stroke="#820000" stroke-width="1" />
<path d="M864.0 77.0 A9.55 9.55 0 0 0 864.0 96.0 Q862.5 86.5 864.0 77.0Z" fill="#008a8e" stroke="#00b8c0" stroke-width=".9"/>
<line x1="855.5" y1="77.5" x2="855.5" y2="95.5" stroke="#00b4bc" stroke-width="1" />
<line x1="856.5" y1="86.5" x2="862.5" y2="81.5" stroke="#004a50" stroke-width="0.8" />
<line x1="846.5" y1="86.5" x2="855" y2="86.5" stroke="#00b4bc" stroke-width="1" />
<path d="M980.0 77.0 A9.55 9.55 0 0 1 980.0 96.0 Q981.5 86.5 980.0 77.0Z" fill="#008a8e" stroke="#00b8c0" stroke-width=".9"/>
<line x1="988.5" y1="77.5" x2="988.5" y2="95.5" stroke="#00b4bc" stroke-width="1" />
<line x1="982.5" y1="93.5" x2="986.5" y2="90.5" stroke="#004a50" stroke-width="0.8" />
<line x1="988" y1="86.5" x2="997" y2="86.5" stroke="#00b4bc" stroke-width="1" />
<line x1="862" y1="212.5" x2="980" y2="212.5" stroke="#820000" stroke-width="1" />
<path d="M864.0 203.0 A9.55 9.55 0 0 0 864.0 222.0 Q862.5 212.5 864.0 203.0Z" fill="#008a8e" stroke="#00b8c0" stroke-width=".9"/>
<line x1="855.5" y1="203.5" x2="855.5" y2="221.5" stroke="#00b4bc" stroke-width="1" />
<line x1="856.5" y1="212.5" x2="862.5" y2="207.5" stroke="#004a50" stroke-width="0.8" />
<line x1="846.5" y1="212.5" x2="855" y2="212.5" stroke="#00b4bc" stroke-width="1" />
<path d="M980.0 203.0 A9.55 9.55 0 0 1 980.0 222.0 Q981.5 212.5 980.0 203.0Z" fill="#008a8e" stroke="#00b8c0" stroke-width=".9"/>
<line x1="988.5" y1="203.5" x2="988.5" y2="221.5" stroke="#00b4bc" stroke-width="1" />
<line x1="982.5" y1="219.5" x2="986.5" y2="216.5" stroke="#004a50" stroke-width="0.8" />
<line x1="988" y1="212.5" x2="997" y2="212.5" stroke="#00b4bc" stroke-width="1" />
<line x1="1022" y1="86.5" x2="1140" y2="86.5" stroke="#820000" stroke-width="1" />
<path d="M1024.0 77.0 A9.55 9.55 0 0 0 1024.0 96.0 Q1022.5 86.5 1024.0 77.0Z" fill="#008a8e" stroke="#00b8c0" stroke-width=".9"/>
<line x1="1015.5" y1="77.5" x2="1015.5" y2="95.5" stroke="#00b4bc" stroke-width="1" />
<line x1="1016.5" y1="86.5" x2="1022.5" y2="81.5" stroke="#004a50" stroke-width="0.8" />
<line x1="1006.5" y1="86.5" x2="1015" y2="86.5" stroke="#00b4bc" stroke-width="1" />
<path d="M1140.0 77.0 A9.55 9.55 0 0 1 1140.0 96.0 Q1141.5 86.5 1140.0 77.0Z" fill="#008a8e" stroke="#00b8c0" stroke-width=".9"/>
<line x1="1148.5" y1="77.5" x2="1148.5" y2="95.5" stroke="#00b4bc" stroke-width="1" />
<line x1="1142.5" y1="93.5" x2="1146.5" y2="90.5" stroke="#004a50" stroke-width="0.8" />
<line x1="1148" y1="86.5" x2="1157" y2="86.5" stroke="#00b4bc" stroke-width="1" />
<line x1="1022" y1="212.5" x2="1140" y2="212.5" stroke="#820000" stroke-width="1" />
<path d="M1024.0 203.0 A9.55 9.55 0 0 0 1024.0 222.0 Q1022.5 212.5 1024.0 203.0Z" fill="#008a8e" stroke="#00b8c0" stroke-width=".9"/>
<line x1="1015.5" y1="203.5" x2="1015.5" y2="221.5" stroke="#00b4bc" stroke-width="1" />
<line x1="1016.5" y1="212.5" x2="1022.5" y2="207.5" stroke="#004a50" stroke-width="0.8" />
<line x1="1006.5" y1="212.5" x2="1015" y2="212.5" stroke="#00b4bc" stroke-width="1" />
<path d="M1140.0 203.0 A9.55 9.55 0 0 1 1140.0 222.0 Q1141.5 212.5 1140.0 203.0Z" fill="#008a8e" stroke="#00b8c0" stroke-width=".9"/>
<line x1="1148.5" y1="203.5" x2="1148.5" y2="221.5" stroke="#00b4bc" stroke-width="1" />
<line x1="1142.5" y1="219.5" x2="1146.5" y2="216.5" stroke="#004a50" stroke-width="0.8" />
<line x1="1148" y1="212.5" x2="1157" y2="212.5" stroke="#00b4bc" stroke-width="1" />
<line x1="222" y1="470.5" x2="340" y2="470.5" stroke="#820000" stroke-width="1" />
<path d="M224.0 461.0 A9.55 9.55 0 0 0 224.0 480.0 Q222.5 470.5 224.0 461.0Z" fill="#008a8e" stroke="#00b8c0" stroke-width=".9"/>
<line x1="215.5" y1="461.5" x2="215.5" y2="479.5" stroke="#00b4bc" stroke-width="1" />
<line x1="216.5" y1="470.5" x2="222.5" y2="465.5" stroke="#004a50" stroke-width="0.8" />
<line x1="206.5" y1="470.5" x2="215" y2="470.5" stroke="#00b4bc" stroke-width="1" />
<path d="M340.0 461.0 A9.55 9.55 0 0 1 340.0 480.0 Q341.5 470.5 340.0 461.0Z" fill="#008a8e" stroke="#00b8c0" stroke-width=".9"/>
<line x1="348.5" y1="461.5" x2="348.5" y2="479.5" stroke="#00b4bc" stroke-width="1" />
<line x1="342.5" y1="477.5" x2="346.5" y2="474.5" stroke="#004a50" stroke-width="0.8" />
<line x1="348" y1="470.5" x2="357" y2="470.5" stroke="#00b4bc" stroke-width="1" />
<line x1="222" y1="596.5" x2="340" y2="596.5" stroke="#820000" stroke-width="1" />
<path d="M224.0 587.0 A9.55 9.55 0 0 0 224.0 606.0 Q222.5 596.5 224.0 587.0Z" fill="#008a8e" stroke="#00b8c0" stroke-width=".9"/>
<line x1="215.5" y1="587.5" x2="215.5" y2="605.5" stroke="#00b4bc" stroke-width="1" />
<line x1="216.5" y1="596.5" x2="222.5" y2="591.5" stroke="#004a50" stroke-width="0.8" />
<line x1="206.5" y1="596.5" x2="215" y2="596.5" stroke="#00b4bc" stroke-width="1" />
<path d="M340.0 587.0 A9.55 9.55 0 0 1 340.0 606.0 Q341.5 596.5 340.0 587.0Z" fill="#008a8e" stroke="#00b8c0" stroke-width=".9"/>
<line x1="348.5" y1="587.5" x2="348.5" y2="605.5" stroke="#00b4bc" stroke-width="1" />
<line x1="342.5" y1="603.5" x2="346.5" y2="600.5" stroke="#004a50" stroke-width="0.8" />
<line x1="348" y1="596.5" x2="357" y2="596.5" stroke="#00b4bc" stroke-width="1" />
<line x1="382" y1="470.5" x2="500" y2="470.5" stroke="#820000" stroke-width="1" />
<path d="M384.0 461.0 A9.55 9.55 0 0 0 384.0 480.0 Q382.5 470.5 384.0 461.0Z" fill="#008a8e" stroke="#00b8c0" stroke-width=".9"/>
<line x1="375.5" y1="461.5" x2="375.5" y2="479.5" stroke="#00b4bc" stroke-width="1" />
<line x1="376.5" y1="470.5" x2="382.5" y2="465.5" stroke="#004a50" stroke-width="0.8" />
<line x1="366.5" y1="470.5" x2="375" y2="470.5" stroke="#00b4bc" stroke-width="1" />
<path d="M500.0 461.0 A9.55 9.55 0 0 1 500.0 480.0 Q501.5 470.5 500.0 461.0Z" fill="#008a8e" stroke="#00b8c0" stroke-width=".9"/>
<line x1="508.5" y1="461.5" x2="508.5" y2="479.5" stroke="#00b4bc" stroke-width="1" />
<line x1="502.5" y1="477.5" x2="506.5" y2="474.5" stroke="#004a50" stroke-width="0.8" />
<line x1="508" y1="470.5" x2="517" y2="470.5" stroke="#00b4bc" stroke-width="1" />
<line x1="382" y1="596.5" x2="500" y2="596.5" stroke="#820000" stroke-width="1" />
<path d="M384.0 587.0 A9.55 9.55 0 0 0 384.0 606.0 Q382.5 596.5 384.0 587.0Z" fill="#008a8e" stroke="#00b8c0" stroke-width=".9"/>
<line x1="375.5" y1="587.5" x2="375.5" y2="605.5" stroke="#00b4bc" stroke-width="1" />
<line x1="376.5" y1="596.5" x2="382.5" y2="591.5" stroke="#004a50" stroke-width="0.8" />
<line x1="366.5" y1="596.5" x2="375" y2="596.5" stroke="#00b4bc" stroke-width="1" />
<path d="M500.0 587.0 A9.55 9.55 0 0 1 500.0 606.0 Q501.5 596.5 500.0 587.0Z" fill="#008a8e" stroke="#00b8c0" stroke-width=".9"/>
<line x1="508.5" y1="587.5" x2="508.5" y2="605.5" stroke="#00b4bc" stroke-width="1" />
<line x1="502.5" y1="603.5" x2="506.5" y2="600.5" stroke="#004a50" stroke-width="0.8" />
<line x1="508" y1="596.5" x2="517" y2="596.5" stroke="#00b4bc" stroke-width="1" />
<line x1="542" y1="470.5" x2="660" y2="470.5" stroke="#820000" stroke-width="1" />
<path d="M544.0 461.0 A9.55 9.55 0 0 0 544.0 480.0 Q542.5 470.5 544.0 461.0Z" fill="#008a8e" stroke="#00b8c0" stroke-width=".9"/>
<line x1="535.5" y1="461.5" x2="535.5" y2="479.5" stroke="#00b4bc" stroke-width="1" />
<line x1="536.5" y1="470.5" x2="542.5" y2="465.5" stroke="#004a50" stroke-width="0.8" />
<line x1="526.5" y1="470.5" x2="535" y2="470.5" stroke="#00b4bc" stroke-width="1" />
<path d="M660.0 461.0 A9.55 9.55 0 0 1 660.0 480.0 Q661.5 470.5 660.0 461.0Z" fill="#008a8e" stroke="#00b8c0" stroke-width=".9"/>
<line x1="668.5" y1="461.5" x2="668.5" y2="479.5" stroke="#00b4bc" stroke-width="1" />
<line x1="662.5" y1="477.5" x2="666.5" y2="474.5" stroke="#004a50" stroke-width="0.8" />
<line x1="668" y1="470.5" x2="677" y2="470.5" stroke="#00b4bc" stroke-width="1" />
<line x1="542" y1="596.5" x2="660" y2="596.5" stroke="#820000" stroke-width="1" />
<path d="M544.0 587.0 A9.55 9.55 0 0 0 544.0 606.0 Q542.5 596.5 544.0 587.0Z" fill="#008a8e" stroke="#00b8c0" stroke-width=".9"/>
<line x1="535.5" y1="587.5" x2="535.5" y2="605.5" stroke="#00b4bc" stroke-width="1" />
<line x1="536.5" y1="596.5" x2="542.5" y2="591.5" stroke="#004a50" stroke-width="0.8" />
<line x1="526.5" y1="596.5" x2="535" y2="596.5" stroke="#00b4bc" stroke-width="1" />
<path d="M660.0 587.0 A9.55 9.55 0 0 1 660.0 606.0 Q661.5 596.5 660.0 587.0Z" fill="#008a8e" stroke="#00b8c0" stroke-width=".9"/>
<line x1="668.5" y1="587.5" x2="668.5" y2="605.5" stroke="#00b4bc" stroke-width="1" />
<line x1="662.5" y1="603.5" x2="666.5" y2="600.5" stroke="#004a50" stroke-width="0.8" />
<line x1="668" y1="596.5" x2="677" y2="596.5" stroke="#00b4bc" stroke-width="1" />
<line x1="702" y1="470.5" x2="820" y2="470.5" stroke="#820000" stroke-width="1" />
<path d="M704.0 461.0 A9.55 9.55 0 0 0 704.0 480.0 Q702.5 470.5 704.0 461.0Z" fill="#008a8e" stroke="#00b8c0" stroke-width=".9"/>
<line x1="695.5" y1="461.5" x2="695.5" y2="479.5" stroke="#00b4bc" stroke-width="1" />
<line x1="696.5" y1="470.5" x2="702.5" y2="465.5" stroke="#004a50" stroke-width="0.8" />
<line x1="686.5" y1="470.5" x2="695" y2="470.5" stroke="#00b4bc" stroke-width="1" />
<path d="M820.0 461.0 A9.55 9.55 0 0 1 820.0 480.0 Q821.5 470.5 820.0 461.0Z" fill="#008a8e" stroke="#00b8c0" stroke-width=".9"/>
<line x1="828.5" y1="461.5" x2="828.5" y2="479.5" stroke="#00b4bc" stroke-width="1" />
<line x1="822.5" y1="477.5" x2="826.5" y2="474.5" stroke="#004a50" stroke-width="0.8" />
<line x1="828" y1="470.5" x2="837" y2="470.5" stroke="#00b4bc" stroke-width="1" />
<line x1="702" y1="596.5" x2="820" y2="596.5" stroke="#820000" stroke-width="1" />
<path d="M704.0 587.0 A9.55 9.55 0 0 0 704.0 606.0 Q702.5 596.5 704.0 587.0Z" fill="#008a8e" stroke="#00b8c0" stroke-width=".9"/>
<line x1="695.5" y1="587.5" x2="695.5" y2="605.5" stroke="#00b4bc" stroke-width="1" />
<line x1="696.5" y1="596.5" x2="702.5" y2="591.5" stroke="#004a50" stroke-width="0.8" />
<line x1="686.5" y1="596.5" x2="695" y2="596.5" stroke="#00b4bc" stroke-width="1" />
<path d="M820.0 587.0 A9.55 9.55 0 0 1 820.0 606.0 Q821.5 596.5 820.0 587.0Z" fill="#008a8e" stroke="#00b8c0" stroke-width=".9"/>
<line x1="828.5" y1="587.5" x2="828.5" y2="605.5" stroke="#00b4bc" stroke-width="1" />
<line x1="822.5" y1="603.5" x2="826.5" y2="600.5" stroke="#004a50" stroke-width="0.8" />
<line x1="828" y1="596.5" x2="837" y2="596.5" stroke="#00b4bc" stroke-width="1" />
<line x1="862" y1="470.5" x2="980" y2="470.5" stroke="#820000" stroke-width="1" />
<path d="M864.0 461.0 A9.55 9.55 0 0 0 864.0 480.0 Q862.5 470.5 864.0 461.0Z" fill="#008a8e" stroke="#00b8c0" stroke-width=".9"/>
<line x1="855.5" y1="461.5" x2="855.5" y2="479.5" stroke="#00b4bc" stroke-width="1" />
<line x1="856.5" y1="470.5" x2="862.5" y2="465.5" stroke="#004a50" stroke-width="0.8" />
<line x1="846.5" y1="470.5" x2="855" y2="470.5" stroke="#00b4bc" stroke-width="1" />
<path d="M980.0 461.0 A9.55 9.55 0 0 1 980.0 480.0 Q981.5 470.5 980.0 461.0Z" fill="#008a8e" stroke="#00b8c0" stroke-width=".9"/>
<line x1="988.5" y1="461.5" x2="988.5" y2="479.5" stroke="#00b4bc" stroke-width="1" />
<line x1="982.5" y1="477.5" x2="986.5" y2="474.5" stroke="#004a50" stroke-width="0.8" />
<line x1="988" y1="470.5" x2="997" y2="470.5" stroke="#00b4bc" stroke-width="1" />
<line x1="862" y1="596.5" x2="980" y2="596.5" stroke="#820000" stroke-width="1" />
<path d="M864.0 587.0 A9.55 9.55 0 0 0 864.0 606.0 Q862.5 596.5 864.0 587.0Z" fill="#008a8e" stroke="#00b8c0" stroke-width=".9"/>
<line x1="855.5" y1="587.5" x2="855.5" y2="605.5" stroke="#00b4bc" stroke-width="1" />
<line x1="856.5" y1="596.5" x2="862.5" y2="591.5" stroke="#004a50" stroke-width="0.8" />
<line x1="846.5" y1="596.5" x2="855" y2="596.5" stroke="#00b4bc" stroke-width="1" />
<path d="M980.0 587.0 A9.55 9.55 0 0 1 980.0 606.0 Q981.5 596.5 980.0 587.0Z" fill="#008a8e" stroke="#00b8c0" stroke-width=".9"/>
<line x1="988.5" y1="587.5" x2="988.5" y2="605.5" stroke="#00b4bc" stroke-width="1" />
<line x1="982.5" y1="603.5" x2="986.5" y2="600.5" stroke="#004a50" stroke-width="0.8" />
<line x1="988" y1="596.5" x2="997" y2="596.5" stroke="#00b4bc" stroke-width="1" />
<line x1="1022" y1="470.5" x2="1140" y2="470.5" stroke="#820000" stroke-width="1" />
<path d="M1024.0 461.0 A9.55 9.55 0 0 0 1024.0 480.0 Q1022.5 470.5 1024.0 461.0Z" fill="#008a8e" stroke="#00b8c0" stroke-width=".9"/>
<line x1="1015.5" y1="461.5" x2="1015.5" y2="479.5" stroke="#00b4bc" stroke-width="1" />
<line x1="1016.5" y1="470.5" x2="1022.5" y2="465.5" stroke="#004a50" stroke-width="0.8" />
<line x1="1006.5" y1="470.5" x2="1015" y2="470.5" stroke="#00b4bc" stroke-width="1" />
<path d="M1140.0 461.0 A9.55 9.55 0 0 1 1140.0 480.0 Q1141.5 470.5 1140.0 461.0Z" fill="#008a8e" stroke="#00b8c0" stroke-width=".9"/>
<line x1="1148.5" y1="461.5" x2="1148.5" y2="479.5" stroke="#00b4bc" stroke-width="1" />
<line x1="1142.5" y1="477.5" x2="1146.5" y2="474.5" stroke="#004a50" stroke-width="0.8" />
<line x1="1148" y1="470.5" x2="1157" y2="470.5" stroke="#00b4bc" stroke-width="1" />
<line x1="1022" y1="596.5" x2="1140" y2="596.5" stroke="#820000" stroke-width="1" />
<path d="M1024.0 587.0 A9.55 9.55 0 0 0 1024.0 606.0 Q1022.5 596.5 1024.0 587.0Z" fill="#008a8e" stroke="#00b8c0" stroke-width=".9"/>
<line x1="1015.5" y1="587.5" x2="1015.5" y2="605.5" stroke="#00b4bc" stroke-width="1" />
<line x1="1016.5" y1="596.5" x2="1022.5" y2="591.5" stroke="#004a50" stroke-width="0.8" />
<line x1="1006.5" y1="596.5" x2="1015" y2="596.5" stroke="#00b4bc" stroke-width="1" />
<path d="M1140.0 587.0 A9.55 9.55 0 0 1 1140.0 606.0 Q1141.5 596.5 1140.0 587.0Z" fill="#008a8e" stroke="#00b8c0" stroke-width=".9"/>
<line x1="1148.5" y1="587.5" x2="1148.5" y2="605.5" stroke="#00b4bc" stroke-width="1" />
<line x1="1142.5" y1="603.5" x2="1146.5" y2="600.5" stroke="#004a50" stroke-width="0.8" />
<line x1="1148" y1="596.5" x2="1157" y2="596.5" stroke="#00b4bc" stroke-width="1" />
<line x1="1182" y1="470.5" x2="1269" y2="470.5" stroke="#820000" stroke-width="1" />
<path d="M1184.0 461.0 A9.55 9.55 0 0 0 1184.0 480.0 Q1182.5 470.5 1184.0 461.0Z" fill="#008a8e" stroke="#00b8c0" stroke-width=".9"/>
<line x1="1175.5" y1="461.5" x2="1175.5" y2="479.5" stroke="#00b4bc" stroke-width="1" />
<line x1="1176.5" y1="470.5" x2="1182.5" y2="465.5" stroke="#004a50" stroke-width="0.8" />
<line x1="1166.5" y1="470.5" x2="1175" y2="470.5" stroke="#00b4bc" stroke-width="1" />
<line x1="1182" y1="596.5" x2="1269" y2="596.5" stroke="#820000" stroke-width="1" />
<path d="M1184.0 587.0 A9.55 9.55 0 0 0 1184.0 606.0 Q1182.5 596.5 1184.0 587.0Z" fill="#008a8e" stroke="#00b8c0" stroke-width=".9"/>
<line x1="1175.5" y1="587.5" x2="1175.5" y2="605.5" stroke="#00b4bc" stroke-width="1" />
<line x1="1176.5" y1="596.5" x2="1182.5" y2="591.5" stroke="#004a50" stroke-width="0.8" />
<line x1="1166.5" y1="596.5" x2="1175" y2="596.5" stroke="#00b4bc" stroke-width="1" />
<line x1="62" y1="470.5" x2="180" y2="470.5" stroke="#820000" stroke-width="1" />
<path d="M64.0 461.0 A9.55 9.55 0 0 0 64.0 480.0 Q62.5 470.5 64.0 461.0Z" fill="#008a8e" stroke="#00b8c0" stroke-width=".9"/>
<line x1="55.5" y1="461.5" x2="55.5" y2="479.5" stroke="#00b4bc" stroke-width="1" />
<line x1="56.5" y1="470.5" x2="62.5" y2="465.5" stroke="#004a50" stroke-width="0.8" />
<line x1="46.5" y1="470.5" x2="55" y2="470.5" stroke="#00b4bc" stroke-width="1" />
<path d="M180.0 461.0 A9.55 9.55 0 0 1 180.0 480.0 Q181.5 470.5 180.0 461.0Z" fill="#008a8e" stroke="#00b8c0" stroke-width=".9"/>
<line x1="188.5" y1="461.5" x2="188.5" y2="479.5" stroke="#00b4bc" stroke-width="1" />
<line x1="182.5" y1="477.5" x2="186.5" y2="474.5" stroke="#004a50" stroke-width="0.8" />
<line x1="188" y1="470.5" x2="197" y2="470.5" stroke="#00b4bc" stroke-width="1" />
<line x1="62" y1="596.5" x2="180" y2="596.5" stroke="#820000" stroke-width="1" />
<path d="M64.0 587.0 A9.55 9.55 0 0 0 64.0 606.0 Q62.5 596.5 64.0 587.0Z" fill="#008a8e" stroke="#00b8c0" stroke-width=".9"/>
<line x1="55.5" y1="587.5" x2="55.5" y2="605.5" stroke="#00b4bc" stroke-width="1" />
<line x1="56.5" y1="596.5" x2="62.5" y2="591.5" stroke="#004a50" stroke-width="0.8" />
<line x1="46.5" y1="596.5" x2="55" y2="596.5" stroke="#00b4bc" stroke-width="1" />
<path d="M180.0 587.0 A9.55 9.55 0 0 1 180.0 606.0 Q181.5 596.5 180.0 587.0Z" fill="#008a8e" stroke="#00b8c0" stroke-width=".9"/>
<line x1="188.5" y1="587.5" x2="188.5" y2="605.5" stroke="#00b4bc" stroke-width="1" />
<line x1="182.5" y1="603.5" x2="186.5" y2="600.5" stroke="#004a50" stroke-width="0.8" />
<line x1="188" y1="596.5" x2="197" y2="596.5" stroke="#00b4bc" stroke-width="1" />
<line x1="155" y1="470.2" x2="171" y2="470.2" stroke="#000" stroke-width="2" />
<rect x="427.5" y="231.5" width="29" height="29" stroke="#007c00" stroke-width="1" fill="none" />
<circle cx="442" cy="246" r="12" fill="none" stroke="#007c00" stroke-width="1"/>
<line x1="437" y1="239.5" x2="447" y2="239.5" stroke="#007c00" stroke-width="1" />
<line x1="436" y1="250.5" x2="448" y2="250.5" stroke="#007c00" stroke-width="1" />
<line x1="442.5" y1="246" x2="442.5" y2="255" stroke="#007c00" stroke-width="1" />
<circle cx="477.5" cy="279" r="5" fill="none" stroke="#007c00" stroke-width="1"/>
<line x1="477.5" y1="274" x2="477.5" y2="263" stroke="#007c00" stroke-width="1" />
<line x1="471.5" y1="263.5" x2="483.5" y2="263.5" stroke="#007c00" stroke-width="1" />
<path d="M457 256.5H477.5V263.5" stroke="#820000" stroke-width="1" fill="none" />
<rect x="587.5" y="231.5" width="29" height="29" stroke="#007c00" stroke-width="1" fill="none" />
<circle cx="602" cy="246" r="12" fill="none" stroke="#007c00" stroke-width="1"/>
<line x1="597" y1="239.5" x2="607" y2="239.5" stroke="#007c00" stroke-width="1" />
<line x1="596" y1="250.5" x2="608" y2="250.5" stroke="#007c00" stroke-width="1" />
<line x1="602.5" y1="246" x2="602.5" y2="255" stroke="#007c00" stroke-width="1" />
<circle cx="637.5" cy="279" r="5" fill="none" stroke="#007c00" stroke-width="1"/>
<line x1="637.5" y1="274" x2="637.5" y2="263" stroke="#007c00" stroke-width="1" />
<line x1="631.5" y1="263.5" x2="643.5" y2="263.5" stroke="#007c00" stroke-width="1" />
<path d="M617 256.5H637.5V263.5" stroke="#820000" stroke-width="1" fill="none" />
<rect x="747.5" y="231.5" width="29" height="29" stroke="#007c00" stroke-width="1" fill="none" />
<circle cx="762" cy="246" r="12" fill="none" stroke="#007c00" stroke-width="1"/>
<line x1="757" y1="239.5" x2="767" y2="239.5" stroke="#007c00" stroke-width="1" />
<line x1="756" y1="250.5" x2="768" y2="250.5" stroke="#007c00" stroke-width="1" />
<line x1="762.5" y1="246" x2="762.5" y2="255" stroke="#007c00" stroke-width="1" />
<circle cx="797.5" cy="279" r="5" fill="none" stroke="#007c00" stroke-width="1"/>
<line x1="797.5" y1="274" x2="797.5" y2="263" stroke="#007c00" stroke-width="1" />
<line x1="791.5" y1="263.5" x2="803.5" y2="263.5" stroke="#007c00" stroke-width="1" />
<path d="M777 256.5H797.5V263.5" stroke="#820000" stroke-width="1" fill="none" />
<rect x="907.5" y="231.5" width="29" height="29" stroke="#007c00" stroke-width="1" fill="none" />
<circle cx="922" cy="246" r="12" fill="none" stroke="#007c00" stroke-width="1"/>
<line x1="917" y1="239.5" x2="927" y2="239.5" stroke="#007c00" stroke-width="1" />
<line x1="916" y1="250.5" x2="928" y2="250.5" stroke="#007c00" stroke-width="1" />
<line x1="922.5" y1="246" x2="922.5" y2="255" stroke="#007c00" stroke-width="1" />
<circle cx="957.5" cy="279" r="5" fill="none" stroke="#007c00" stroke-width="1"/>
<line x1="957.5" y1="274" x2="957.5" y2="263" stroke="#007c00" stroke-width="1" />
<line x1="951.5" y1="263.5" x2="963.5" y2="263.5" stroke="#007c00" stroke-width="1" />
<path d="M937 256.5H957.5V263.5" stroke="#820000" stroke-width="1" fill="none" />
<rect x="1067.5" y="231.5" width="29" height="29" stroke="#007c00" stroke-width="1" fill="none" />
<circle cx="1082" cy="246" r="12" fill="none" stroke="#007c00" stroke-width="1"/>
<line x1="1077" y1="239.5" x2="1087" y2="239.5" stroke="#007c00" stroke-width="1" />
<line x1="1076" y1="250.5" x2="1088" y2="250.5" stroke="#007c00" stroke-width="1" />
<line x1="1082.5" y1="246" x2="1082.5" y2="255" stroke="#007c00" stroke-width="1" />
<circle cx="1117.5" cy="279" r="5" fill="none" stroke="#007c00" stroke-width="1"/>
<line x1="1117.5" y1="274" x2="1117.5" y2="263" stroke="#007c00" stroke-width="1" />
<line x1="1111.5" y1="263.5" x2="1123.5" y2="263.5" stroke="#007c00" stroke-width="1" />
<path d="M1097 256.5H1117.5V263.5" stroke="#820000" stroke-width="1" fill="none" />
<rect x="267.5" y="427.5" width="29" height="29" stroke="#007c00" stroke-width="1" fill="none" />
<circle cx="282" cy="442" r="12" fill="none" stroke="#007c00" stroke-width="1"/>
<line x1="276" y1="437.5" x2="288" y2="437.5" stroke="#007c00" stroke-width="1" />
<line x1="282.5" y1="433" x2="282.5" y2="442" stroke="#007c00" stroke-width="1" />
<line x1="277" y1="448.5" x2="287" y2="448.5" stroke="#007c00" stroke-width="1" />
<circle cx="318.5" cy="404" r="5" fill="none" stroke="#007c00" stroke-width="1"/>
<line x1="318.5" y1="409" x2="318.5" y2="420" stroke="#007c00" stroke-width="1" />
<line x1="312.5" y1="419.5" x2="324.5" y2="419.5" stroke="#007c00" stroke-width="1" />
<path d="M297 432H318.5V419.5" stroke="#820000" stroke-width="1" fill="none" />
<rect x="427.5" y="427.5" width="29" height="29" stroke="#007c00" stroke-width="1" fill="none" />
<circle cx="442" cy="442" r="12" fill="none" stroke="#007c00" stroke-width="1"/>
<line x1="436" y1="437.5" x2="448" y2="437.5" stroke="#007c00" stroke-width="1" />
<line x1="442.5" y1="433" x2="442.5" y2="442" stroke="#007c00" stroke-width="1" />
<line x1="437" y1="448.5" x2="447" y2="448.5" stroke="#007c00" stroke-width="1" />
<circle cx="478.5" cy="404" r="5" fill="none" stroke="#007c00" stroke-width="1"/>
<line x1="478.5" y1="409" x2="478.5" y2="420" stroke="#007c00" stroke-width="1" />
<line x1="472.5" y1="419.5" x2="484.5" y2="419.5" stroke="#007c00" stroke-width="1" />
<path d="M457 432H478.5V419.5" stroke="#820000" stroke-width="1" fill="none" />
<rect x="587.5" y="427.5" width="29" height="29" stroke="#007c00" stroke-width="1" fill="none" />
<circle cx="602" cy="442" r="12" fill="none" stroke="#007c00" stroke-width="1"/>
<line x1="596" y1="437.5" x2="608" y2="437.5" stroke="#007c00" stroke-width="1" />
<line x1="602.5" y1="433" x2="602.5" y2="442" stroke="#007c00" stroke-width="1" />
<line x1="597" y1="448.5" x2="607" y2="448.5" stroke="#007c00" stroke-width="1" />
<circle cx="638.5" cy="404" r="5" fill="none" stroke="#007c00" stroke-width="1"/>
<line x1="638.5" y1="409" x2="638.5" y2="420" stroke="#007c00" stroke-width="1" />
<line x1="632.5" y1="419.5" x2="644.5" y2="419.5" stroke="#007c00" stroke-width="1" />
<path d="M617 432H638.5V419.5" stroke="#820000" stroke-width="1" fill="none" />
<rect x="747.5" y="427.5" width="29" height="29" stroke="#007c00" stroke-width="1" fill="none" />
<circle cx="762" cy="442" r="12" fill="none" stroke="#007c00" stroke-width="1"/>
<line x1="756" y1="437.5" x2="768" y2="437.5" stroke="#007c00" stroke-width="1" />
<line x1="762.5" y1="433" x2="762.5" y2="442" stroke="#007c00" stroke-width="1" />
<line x1="757" y1="448.5" x2="767" y2="448.5" stroke="#007c00" stroke-width="1" />
<circle cx="798.5" cy="404" r="5" fill="none" stroke="#007c00" stroke-width="1"/>
<line x1="798.5" y1="409" x2="798.5" y2="420" stroke="#007c00" stroke-width="1" />
<line x1="792.5" y1="419.5" x2="804.5" y2="419.5" stroke="#007c00" stroke-width="1" />
<path d="M777 432H798.5V419.5" stroke="#820000" stroke-width="1" fill="none" />
<rect x="907.5" y="427.5" width="29" height="29" stroke="#007c00" stroke-width="1" fill="none" />
<circle cx="922" cy="442" r="12" fill="none" stroke="#007c00" stroke-width="1"/>
<line x1="916" y1="437.5" x2="928" y2="437.5" stroke="#007c00" stroke-width="1" />
<line x1="922.5" y1="433" x2="922.5" y2="442" stroke="#007c00" stroke-width="1" />
<line x1="917" y1="448.5" x2="927" y2="448.5" stroke="#007c00" stroke-width="1" />
<circle cx="958.5" cy="404" r="5" fill="none" stroke="#007c00" stroke-width="1"/>
<line x1="954.5" y1="404.5" x2="962.5" y2="404.5" stroke="#a0a0a0" stroke-width="1" />
<line x1="958.5" y1="400" x2="958.5" y2="408" stroke="#a0a0a0" stroke-width="1" />
<line x1="958.5" y1="409" x2="958.5" y2="420" stroke="#007c00" stroke-width="1" />
<line x1="952.5" y1="419.5" x2="964.5" y2="419.5" stroke="#007c00" stroke-width="1" />
<path d="M937 432H958.5V419.5" stroke="#820000" stroke-width="1" fill="none" />
<rect x="1067.5" y="427.5" width="29" height="29" stroke="#007c00" stroke-width="1" fill="none" />
<circle cx="1082" cy="442" r="12" fill="none" stroke="#007c00" stroke-width="1"/>
<line x1="1076" y1="437.5" x2="1088" y2="437.5" stroke="#007c00" stroke-width="1" />
<line x1="1082.5" y1="433" x2="1082.5" y2="442" stroke="#007c00" stroke-width="1" />
<line x1="1077" y1="448.5" x2="1087" y2="448.5" stroke="#007c00" stroke-width="1" />
<circle cx="1118.5" cy="404" r="5" fill="none" stroke="#007c00" stroke-width="1"/>
<line x1="1118.5" y1="409" x2="1118.5" y2="420" stroke="#007c00" stroke-width="1" />
<line x1="1112.5" y1="419.5" x2="1124.5" y2="419.5" stroke="#007c00" stroke-width="1" />
<path d="M1097 432H1118.5V419.5" stroke="#820000" stroke-width="1" fill="none" />
<rect x="1227.5" y="427.5" width="29" height="29" stroke="#007c00" stroke-width="1" fill="none" />
<circle cx="1242" cy="442" r="12" fill="none" stroke="#007c00" stroke-width="1"/>
<line x1="1236" y1="437.5" x2="1248" y2="437.5" stroke="#007c00" stroke-width="1" />
<line x1="1242.5" y1="433" x2="1242.5" y2="442" stroke="#007c00" stroke-width="1" />
<line x1="1237" y1="448.5" x2="1247" y2="448.5" stroke="#007c00" stroke-width="1" />
<circle cx="1278.5" cy="404" r="5" fill="none" stroke="#007c00" stroke-width="1"/>
<line x1="1278.5" y1="409" x2="1278.5" y2="420" stroke="#007c00" stroke-width="1" />
<line x1="1272.5" y1="419.5" x2="1284.5" y2="419.5" stroke="#007c00" stroke-width="1" />
<path d="M1257 432H1278.5V419.5" stroke="#820000" stroke-width="1" fill="none" />
<rect x="107.5" y="427.5" width="29" height="29" stroke="#007c00" stroke-width="1" fill="none" />
<circle cx="122" cy="442" r="12" fill="none" stroke="#007c00" stroke-width="1"/>
<line x1="116" y1="437.5" x2="128" y2="437.5" stroke="#007c00" stroke-width="1" />
<line x1="122.5" y1="433" x2="122.5" y2="442" stroke="#007c00" stroke-width="1" />
<line x1="117" y1="448.5" x2="127" y2="448.5" stroke="#007c00" stroke-width="1" />
<circle cx="115" cy="404" r="5" fill="none" stroke="#007c00" stroke-width="1"/>
<line x1="115.5" y1="409" x2="115.5" y2="420" stroke="#007c00" stroke-width="1" />
<line x1="109" y1="419.5" x2="121" y2="419.5" stroke="#007c00" stroke-width="1" />
<line x1="115.5" y1="419.5" x2="115.5" y2="427" stroke="#820000" stroke-width="1" />
<line x1="457" y1="245.5" x2="525" y2="245.5" stroke="#820000" stroke-width="1" />
<line x1="564" y1="245.5" x2="587" y2="245.5" stroke="#820000" stroke-width="1" />
<line x1="617" y1="245.5" x2="747" y2="245.5" stroke="#820000" stroke-width="1" />
<line x1="777" y1="245.5" x2="843" y2="245.5" stroke="#820000" stroke-width="1" />
<line x1="887" y1="245.5" x2="907" y2="245.5" stroke="#820000" stroke-width="1" />
<line x1="936" y1="245.5" x2="1067" y2="245.5" stroke="#820000" stroke-width="1" />
<line x1="137" y1="441.5" x2="180" y2="441.5" stroke="#820000" stroke-width="1" />
<line x1="242" y1="441.5" x2="267" y2="441.5" stroke="#820000" stroke-width="1" />
<line x1="297" y1="441.5" x2="427" y2="441.5" stroke="#820000" stroke-width="1" />
<line x1="457" y1="441.5" x2="523" y2="441.5" stroke="#820000" stroke-width="1" />
<line x1="564" y1="441.5" x2="587" y2="441.5" stroke="#820000" stroke-width="1" />
<line x1="617" y1="441.5" x2="747" y2="441.5" stroke="#820000" stroke-width="1" />
<line x1="777" y1="441.5" x2="846" y2="441.5" stroke="#820000" stroke-width="1" />
<line x1="887" y1="441.5" x2="907" y2="441.5" stroke="#820000" stroke-width="1" />
<line x1="937" y1="441.5" x2="1067" y2="441.5" stroke="#820000" stroke-width="1" />
<line x1="1097" y1="441.5" x2="1165" y2="441.5" stroke="#820000" stroke-width="1" />
<line x1="1207" y1="441.5" x2="1227" y2="441.5" stroke="#820000" stroke-width="1" />
<line x1="1257" y1="441.5" x2="1269" y2="441.5" stroke="#820000" stroke-width="1" />
<g><line x1="46" y1="630.5" x2="111.8" y2="630.5" stroke="#4a4a4a" stroke-width="1" /><line x1="68.4" y1="632.5" x2="111.8" y2="632.5" stroke="#4a4a4a" stroke-width="1" /><line x1="68.4" y1="636.5" x2="111.8" y2="636.5" stroke="#4a4a4a" stroke-width="1" /><line x1="46" y1="639.5" x2="68.4" y2="639.5" stroke="#4a4a4a" stroke-width="1" /><line x1="68.5" y1="630" x2="68.5" y2="722" stroke="#4a4a4a" stroke-width="1" /><line x1="111.5" y1="630" x2="111.5" y2="639.3" stroke="#4a4a4a" stroke-width="1" /><path d="M111.8 639.3Q119 651.5 128.3 651.2L145.8 635.1" stroke="#4a4a4a" stroke-width="1" fill="none"/><path d="M46 678.6H68.4" stroke="#4a4a4a" stroke-width="1" fill="none"/><circle cx="57.19999999999999" cy="659.8" r="11" fill="none" stroke="#4a4a4a"/><circle cx="57.19999999999999" cy="659.8" r="9.5" fill="none" stroke="#333"/><path d="M49 659.8H58M55 656.5A3.3 3.3 0 0 1 55 663.1" stroke="#4a4a4a" stroke-width="1" fill="none"/><circle cx="53.5" cy="643.2" r="2.5" fill="none" stroke="#4a6a30"/><rect x="47.400000000000006" y="680" width="20.2" height="29" rx="2" fill="none" stroke="#4a4a4a"/><rect x="48.599999999999994" y="681.5" width="17.8" height="26" rx="1.5" fill="none" stroke="#333"/><circle cx="57" cy="702" r="1.8" fill="none" stroke="#4a4a4a"/><path d="M115.9 683.3L81.5 661.1" stroke="#4a4a4a" stroke-width="1" fill="none"/><path d="M81.5 661.1L96 666.5L93 671Z" stroke="#4a4a4a" stroke-width="1" fill="#4a4a4a"/><line x1="68.4" y1="710.5" x2="146.3" y2="710.5" stroke="#4a4a4a" stroke-width="1" /><line x1="68.4" y1="713.5" x2="146.3" y2="713.5" stroke="#4a4a4a" stroke-width="1" /><line x1="68.4" y1="716.5" x2="146.3" y2="716.5" stroke="#4a4a4a" stroke-width="1" /><line x1="68.4" y1="719.5" x2="146.3" y2="719.5" stroke="#4a4a4a" stroke-width="1" /><line x1="146.3" y1="630.5" x2="197" y2="630.5" stroke="#4a4a4a" stroke-width="1" /><line x1="146.5" y1="630.6" x2="146.5" y2="722" stroke="#4a4a4a" stroke-width="1" /><line x1="150.5" y1="639.6" x2="150.5" y2="641" stroke="#4a4a4a" stroke-width="1" /><line x1="150.5" y1="677.5" x2="150.5" y2="714" stroke="#4a4a4a" stroke-width="1" /><line x1="150" y1="639.5" x2="197" y2="639.5" stroke="#4a4a4a" stroke-width="1" /><line x1="150" y1="714.5" x2="197" y2="714.5" stroke="#4a4a4a" stroke-width="1" /><path d="M150 641L179.5 659.2A36.5 36.5 0 0 1 150 677.5" stroke="#4a4a4a" stroke-width="1" fill="none"/><path d="M168.2 701.2V680Q168.2 675.9 174.05 675.9Q179.9 675.9 179.9 680V701.2Z" fill="none" stroke="#4a4a4a"/><line x1="168.2" y1="680.5" x2="179.9" y2="680.5" stroke="#4a4a4a" stroke-width="1" /><line x1="186.5" y1="630" x2="186.5" y2="722" stroke="#4a4a4a" stroke-width="1" stroke-dasharray="14 3"/><line x1="190.5" y1="630" x2="190.5" y2="722" stroke="#4a4a4a" stroke-width="1" stroke-dasharray="14 3"/><line x1="168.2" y1="716.5" x2="197" y2="716.5" stroke="#4a4a4a" stroke-width="1" /><line x1="168.2" y1="719.5" x2="197" y2="719.5" stroke="#4a4a4a" stroke-width="1" /><line x1="190.5" y1="714" x2="190.5" y2="722" stroke="#4a4a4a" stroke-width="1" /><line x1="194.5" y1="714" x2="194.5" y2="722" stroke="#4a4a4a" stroke-width="1" /><path d="M171 611A9 9 0 0 1 171 628.4" stroke="#00b4bc" stroke-width="1" fill="none"/><rect x="182.9" y="615.6" width="10.3" height="8.7" rx="1.5" fill="none" stroke="#00b4bc"/><line x1="193.2" y1="620.5" x2="201.5" y2="620.5" stroke="#555" stroke-width="1" /><path d="M183 621L188.2 631" stroke="#555" stroke-width="1" fill="none"/><line x1="152.4" y1="613.5" x2="179.0" y2="613.5" stroke="#555" stroke-width="1" /></g>
<g transform="translate(403 0) scale(-1 1)"><line x1="46" y1="630.5" x2="111.8" y2="630.5" stroke="#4a4a4a" stroke-width="1" /><line x1="68.4" y1="632.5" x2="111.8" y2="632.5" stroke="#4a4a4a" stroke-width="1" /><line x1="68.4" y1="636.5" x2="111.8" y2="636.5" stroke="#4a4a4a" stroke-width="1" /><line x1="46" y1="639.5" x2="68.4" y2="639.5" stroke="#4a4a4a" stroke-width="1" /><line x1="68.5" y1="630" x2="68.5" y2="722" stroke="#4a4a4a" stroke-width="1" /><line x1="111.5" y1="630" x2="111.5" y2="639.3" stroke="#4a4a4a" stroke-width="1" /><path d="M111.8 639.3Q119 651.5 128.3 651.2L145.8 635.1" stroke="#4a4a4a" stroke-width="1" fill="none"/><path d="M46 678.6H68.4" stroke="#4a4a4a" stroke-width="1" fill="none"/><circle cx="57.19999999999999" cy="659.8" r="11" fill="none" stroke="#4a4a4a"/><circle cx="57.19999999999999" cy="659.8" r="9.5" fill="none" stroke="#333"/><path d="M49 659.8H58M55 656.5A3.3 3.3 0 0 1 55 663.1" stroke="#4a4a4a" stroke-width="1" fill="none"/><circle cx="53.5" cy="643.2" r="2.5" fill="none" stroke="#4a6a30"/><rect x="47.400000000000006" y="680" width="20.2" height="29" rx="2" fill="none" stroke="#4a4a4a"/><rect x="48.599999999999994" y="681.5" width="17.8" height="26" rx="1.5" fill="none" stroke="#333"/><circle cx="57" cy="702" r="1.8" fill="none" stroke="#4a4a4a"/><path d="M115.9 683.3L81.5 661.1" stroke="#4a4a4a" stroke-width="1" fill="none"/><path d="M81.5 661.1L96 666.5L93 671Z" stroke="#4a4a4a" stroke-width="1" fill="#4a4a4a"/><line x1="68.4" y1="710.5" x2="146.3" y2="710.5" stroke="#4a4a4a" stroke-width="1" /><line x1="68.4" y1="713.5" x2="146.3" y2="713.5" stroke="#4a4a4a" stroke-width="1" /><line x1="68.4" y1="716.5" x2="146.3" y2="716.5" stroke="#4a4a4a" stroke-width="1" /><line x1="68.4" y1="719.5" x2="146.3" y2="719.5" stroke="#4a4a4a" stroke-width="1" /><line x1="146.3" y1="630.5" x2="197" y2="630.5" stroke="#4a4a4a" stroke-width="1" /><line x1="146.5" y1="630.6" x2="146.5" y2="722" stroke="#4a4a4a" stroke-width="1" /><line x1="150.5" y1="639.6" x2="150.5" y2="641" stroke="#4a4a4a" stroke-width="1" /><line x1="150.5" y1="677.5" x2="150.5" y2="714" stroke="#4a4a4a" stroke-width="1" /><line x1="150" y1="639.5" x2="197" y2="639.5" stroke="#4a4a4a" stroke-width="1" /><line x1="150" y1="714.5" x2="197" y2="714.5" stroke="#4a4a4a" stroke-width="1" /><path d="M150 641L179.5 659.2A36.5 36.5 0 0 1 150 677.5" stroke="#4a4a4a" stroke-width="1" fill="none"/><path d="M168.2 701.2V680Q168.2 675.9 174.05 675.9Q179.9 675.9 179.9 680V701.2Z" fill="none" stroke="#4a4a4a"/><line x1="168.2" y1="680.5" x2="179.9" y2="680.5" stroke="#4a4a4a" stroke-width="1" /><line x1="186.5" y1="630" x2="186.5" y2="722" stroke="#4a4a4a" stroke-width="1" stroke-dasharray="14 3"/><line x1="190.5" y1="630" x2="190.5" y2="722" stroke="#4a4a4a" stroke-width="1" stroke-dasharray="14 3"/><line x1="168.2" y1="716.5" x2="197" y2="716.5" stroke="#4a4a4a" stroke-width="1" /><line x1="168.2" y1="719.5" x2="197" y2="719.5" stroke="#4a4a4a" stroke-width="1" /><line x1="190.5" y1="714" x2="190.5" y2="722" stroke="#4a4a4a" stroke-width="1" /><line x1="194.5" y1="714" x2="194.5" y2="722" stroke="#4a4a4a" stroke-width="1" /><path d="M171 611A9 9 0 0 1 171 628.4" stroke="#00b4bc" stroke-width="1" fill="none"/><rect x="182.9" y="615.6" width="10.3" height="8.7" rx="1.5" fill="none" stroke="#00b4bc"/><line x1="193.2" y1="620.5" x2="201.5" y2="620.5" stroke="#555" stroke-width="1" /><path d="M183 621L188.2 631" stroke="#555" stroke-width="1" fill="none"/><line x1="152.4" y1="613.5" x2="179.0" y2="613.5" stroke="#555" stroke-width="1" /></g>
<text x="155.8" y="611" font-size="13.72" fill="#666" textLength="22.4" lengthAdjust="spacingAndGlyphs" font-family="Liberation Sans" stroke="#000" stroke-width="0.55">KD1</text>
<text x="230" y="611" font-size="13.72" fill="#666" textLength="22.4" lengthAdjust="spacingAndGlyphs" font-family="Liberation Sans" stroke="#000" stroke-width="0.55">KD1</text>
<g><line x1="366" y1="630.5" x2="431.8" y2="630.5" stroke="#4a4a4a" stroke-width="1" /><line x1="388.4" y1="632.5" x2="431.8" y2="632.5" stroke="#4a4a4a" stroke-width="1" /><line x1="388.4" y1="636.5" x2="431.8" y2="636.5" stroke="#4a4a4a" stroke-width="1" /><line x1="366" y1="639.5" x2="388.4" y2="639.5" stroke="#4a4a4a" stroke-width="1" /><line x1="388.5" y1="630" x2="388.5" y2="722" stroke="#4a4a4a" stroke-width="1" /><line x1="431.5" y1="630" x2="431.5" y2="639.3" stroke="#4a4a4a" stroke-width="1" /><path d="M431.8 639.3Q439 651.5 448.3 651.2L465.8 635.1" stroke="#4a4a4a" stroke-width="1" fill="none"/><path d="M366 678.6H388.4" stroke="#4a4a4a" stroke-width="1" fill="none"/><circle cx="377.2" cy="659.8" r="11" fill="none" stroke="#4a4a4a"/><circle cx="377.2" cy="659.8" r="9.5" fill="none" stroke="#333"/><path d="M369 659.8H378M375 656.5A3.3 3.3 0 0 1 375 663.1" stroke="#4a4a4a" stroke-width="1" fill="none"/><circle cx="373.5" cy="643.2" r="2.5" fill="none" stroke="#4a6a30"/><rect x="367.4" y="680" width="20.2" height="29" rx="2" fill="none" stroke="#4a4a4a"/><rect x="368.6" y="681.5" width="17.8" height="26" rx="1.5" fill="none" stroke="#333"/><circle cx="377" cy="702" r="1.8" fill="none" stroke="#4a4a4a"/><path d="M435.9 683.3L401.5 661.1" stroke="#4a4a4a" stroke-width="1" fill="none"/><path d="M401.5 661.1L416 666.5L413 671Z" stroke="#4a4a4a" stroke-width="1" fill="#4a4a4a"/><line x1="388.4" y1="710.5" x2="466.3" y2="710.5" stroke="#4a4a4a" stroke-width="1" /><line x1="388.4" y1="713.5" x2="466.3" y2="713.5" stroke="#4a4a4a" stroke-width="1" /><line x1="388.4" y1="716.5" x2="466.3" y2="716.5" stroke="#4a4a4a" stroke-width="1" /><line x1="388.4" y1="719.5" x2="466.3" y2="719.5" stroke="#4a4a4a" stroke-width="1" /><line x1="466.3" y1="630.5" x2="517" y2="630.5" stroke="#4a4a4a" stroke-width="1" /><line x1="466.5" y1="630.6" x2="466.5" y2="722" stroke="#4a4a4a" stroke-width="1" /><line x1="470.5" y1="639.6" x2="470.5" y2="641" stroke="#4a4a4a" stroke-width="1" /><line x1="470.5" y1="677.5" x2="470.5" y2="714" stroke="#4a4a4a" stroke-width="1" /><line x1="470" y1="639.5" x2="517" y2="639.5" stroke="#4a4a4a" stroke-width="1" /><line x1="470" y1="714.5" x2="517" y2="714.5" stroke="#4a4a4a" stroke-width="1" /><path d="M470 641L499.5 659.2A36.5 36.5 0 0 1 470 677.5" stroke="#4a4a4a" stroke-width="1" fill="none"/><path d="M488.2 701.2V680Q488.2 675.9 494.05 675.9Q499.9 675.9 499.9 680V701.2Z" fill="none" stroke="#4a4a4a"/><line x1="488.2" y1="680.5" x2="499.9" y2="680.5" stroke="#4a4a4a" stroke-width="1" /><line x1="506.5" y1="630" x2="506.5" y2="722" stroke="#4a4a4a" stroke-width="1" stroke-dasharray="14 3"/><line x1="510.5" y1="630" x2="510.5" y2="722" stroke="#4a4a4a" stroke-width="1" stroke-dasharray="14 3"/><line x1="488.2" y1="716.5" x2="517" y2="716.5" stroke="#4a4a4a" stroke-width="1" /><line x1="488.2" y1="719.5" x2="517" y2="719.5" stroke="#4a4a4a" stroke-width="1" /><line x1="510.5" y1="714" x2="510.5" y2="722" stroke="#4a4a4a" stroke-width="1" /><line x1="514.5" y1="714" x2="514.5" y2="722" stroke="#4a4a4a" stroke-width="1" /><path d="M491 611A9 9 0 0 1 491 628.4" stroke="#00b4bc" stroke-width="1" fill="none"/><rect x="502.9" y="615.6" width="10.3" height="8.7" rx="1.5" fill="none" stroke="#00b4bc"/><line x1="513.2" y1="620.5" x2="521.5" y2="620.5" stroke="#555" stroke-width="1" /><path d="M503 621L508.2 631" stroke="#555" stroke-width="1" fill="none"/><line x1="472.40000000000003" y1="613.5" x2="499.0" y2="613.5" stroke="#555" stroke-width="1" /></g>
<g transform="translate(1043 0) scale(-1 1)"><line x1="366" y1="630.5" x2="431.8" y2="630.5" stroke="#4a4a4a" stroke-width="1" /><line x1="388.4" y1="632.5" x2="431.8" y2="632.5" stroke="#4a4a4a" stroke-width="1" /><line x1="388.4" y1="636.5" x2="431.8" y2="636.5" stroke="#4a4a4a" stroke-width="1" /><line x1="366" y1="639.5" x2="388.4" y2="639.5" stroke="#4a4a4a" stroke-width="1" /><line x1="388.5" y1="630" x2="388.5" y2="722" stroke="#4a4a4a" stroke-width="1" /><line x1="431.5" y1="630" x2="431.5" y2="639.3" stroke="#4a4a4a" stroke-width="1" /><path d="M431.8 639.3Q439 651.5 448.3 651.2L465.8 635.1" stroke="#4a4a4a" stroke-width="1" fill="none"/><path d="M366 678.6H388.4" stroke="#4a4a4a" stroke-width="1" fill="none"/><circle cx="377.2" cy="659.8" r="11" fill="none" stroke="#4a4a4a"/><circle cx="377.2" cy="659.8" r="9.5" fill="none" stroke="#333"/><path d="M369 659.8H378M375 656.5A3.3 3.3 0 0 1 375 663.1" stroke="#4a4a4a" stroke-width="1" fill="none"/><circle cx="373.5" cy="643.2" r="2.5" fill="none" stroke="#4a6a30"/><rect x="367.4" y="680" width="20.2" height="29" rx="2" fill="none" stroke="#4a4a4a"/><rect x="368.6" y="681.5" width="17.8" height="26" rx="1.5" fill="none" stroke="#333"/><circle cx="377" cy="702" r="1.8" fill="none" stroke="#4a4a4a"/><path d="M435.9 683.3L401.5 661.1" stroke="#4a4a4a" stroke-width="1" fill="none"/><path d="M401.5 661.1L416 666.5L413 671Z" stroke="#4a4a4a" stroke-width="1" fill="#4a4a4a"/><line x1="388.4" y1="710.5" x2="466.3" y2="710.5" stroke="#4a4a4a" stroke-width="1" /><line x1="388.4" y1="713.5" x2="466.3" y2="713.5" stroke="#4a4a4a" stroke-width="1" /><line x1="388.4" y1="716.5" x2="466.3" y2="716.5" stroke="#4a4a4a" stroke-width="1" /><line x1="388.4" y1="719.5" x2="466.3" y2="719.5" stroke="#4a4a4a" stroke-width="1" /><line x1="466.3" y1="630.5" x2="517" y2="630.5" stroke="#4a4a4a" stroke-width="1" /><line x1="466.5" y1="630.6" x2="466.5" y2="722" stroke="#4a4a4a" stroke-width="1" /><line x1="470.5" y1="639.6" x2="470.5" y2="641" stroke="#4a4a4a" stroke-width="1" /><line x1="470.5" y1="677.5" x2="470.5" y2="714" stroke="#4a4a4a" stroke-width="1" /><line x1="470" y1="639.5" x2="517" y2="639.5" stroke="#4a4a4a" stroke-width="1" /><line x1="470" y1="714.5" x2="517" y2="714.5" stroke="#4a4a4a" stroke-width="1" /><path d="M470 641L499.5 659.2A36.5 36.5 0 0 1 470 677.5" stroke="#4a4a4a" stroke-width="1" fill="none"/><path d="M488.2 701.2V680Q488.2 675.9 494.05 675.9Q499.9 675.9 499.9 680V701.2Z" fill="none" stroke="#4a4a4a"/><line x1="488.2" y1="680.5" x2="499.9" y2="680.5" stroke="#4a4a4a" stroke-width="1" /><line x1="506.5" y1="630" x2="506.5" y2="722" stroke="#4a4a4a" stroke-width="1" stroke-dasharray="14 3"/><line x1="510.5" y1="630" x2="510.5" y2="722" stroke="#4a4a4a" stroke-width="1" stroke-dasharray="14 3"/><line x1="488.2" y1="716.5" x2="517" y2="716.5" stroke="#4a4a4a" stroke-width="1" /><line x1="488.2" y1="719.5" x2="517" y2="719.5" stroke="#4a4a4a" stroke-width="1" /><line x1="510.5" y1="714" x2="510.5" y2="722" stroke="#4a4a4a" stroke-width="1" /><line x1="514.5" y1="714" x2="514.5" y2="722" stroke="#4a4a4a" stroke-width="1" /><path d="M491 611A9 9 0 0 1 491 628.4" stroke="#00b4bc" stroke-width="1" fill="none"/><rect x="502.9" y="615.6" width="10.3" height="8.7" rx="1.5" fill="none" stroke="#00b4bc"/><line x1="513.2" y1="620.5" x2="521.5" y2="620.5" stroke="#555" stroke-width="1" /><path d="M503 621L508.2 631" stroke="#555" stroke-width="1" fill="none"/><line x1="472.40000000000003" y1="613.5" x2="499.0" y2="613.5" stroke="#555" stroke-width="1" /></g>
<text x="475.8" y="611" font-size="13.72" fill="#666" textLength="22.4" lengthAdjust="spacingAndGlyphs" font-family="Liberation Sans" stroke="#000" stroke-width="0.55">KD1</text>
<text x="550" y="611" font-size="13.72" fill="#666" textLength="22.4" lengthAdjust="spacingAndGlyphs" font-family="Liberation Sans" stroke="#000" stroke-width="0.55">KD1</text>
<g><line x1="686" y1="630.5" x2="751.8" y2="630.5" stroke="#4a4a4a" stroke-width="1" /><line x1="708.4" y1="632.5" x2="751.8" y2="632.5" stroke="#4a4a4a" stroke-width="1" /><line x1="708.4" y1="636.5" x2="751.8" y2="636.5" stroke="#4a4a4a" stroke-width="1" /><line x1="686" y1="639.5" x2="708.4" y2="639.5" stroke="#4a4a4a" stroke-width="1" /><line x1="708.5" y1="630" x2="708.5" y2="722" stroke="#4a4a4a" stroke-width="1" /><line x1="751.5" y1="630" x2="751.5" y2="639.3" stroke="#4a4a4a" stroke-width="1" /><path d="M751.8 639.3Q759 651.5 768.3 651.2L785.8 635.1" stroke="#4a4a4a" stroke-width="1" fill="none"/><path d="M686 678.6H708.4" stroke="#4a4a4a" stroke-width="1" fill="none"/><circle cx="697.2" cy="659.8" r="11" fill="none" stroke="#4a4a4a"/><circle cx="697.2" cy="659.8" r="9.5" fill="none" stroke="#333"/><path d="M689 659.8H698M695 656.5A3.3 3.3 0 0 1 695 663.1" stroke="#4a4a4a" stroke-width="1" fill="none"/><circle cx="693.5" cy="643.2" r="2.5" fill="none" stroke="#4a6a30"/><rect x="687.4" y="680" width="20.2" height="29" rx="2" fill="none" stroke="#4a4a4a"/><rect x="688.6" y="681.5" width="17.8" height="26" rx="1.5" fill="none" stroke="#333"/><circle cx="697" cy="702" r="1.8" fill="none" stroke="#4a4a4a"/><path d="M755.9 683.3L721.5 661.1" stroke="#4a4a4a" stroke-width="1" fill="none"/><path d="M721.5 661.1L736 666.5L733 671Z" stroke="#4a4a4a" stroke-width="1" fill="#4a4a4a"/><line x1="708.4" y1="710.5" x2="786.3" y2="710.5" stroke="#4a4a4a" stroke-width="1" /><line x1="708.4" y1="713.5" x2="786.3" y2="713.5" stroke="#4a4a4a" stroke-width="1" /><line x1="708.4" y1="716.5" x2="786.3" y2="716.5" stroke="#4a4a4a" stroke-width="1" /><line x1="708.4" y1="719.5" x2="786.3" y2="719.5" stroke="#4a4a4a" stroke-width="1" /><line x1="786.3" y1="630.5" x2="837" y2="630.5" stroke="#4a4a4a" stroke-width="1" /><line x1="786.5" y1="630.6" x2="786.5" y2="722" stroke="#4a4a4a" stroke-width="1" /><line x1="790.5" y1="639.6" x2="790.5" y2="641" stroke="#4a4a4a" stroke-width="1" /><line x1="790.5" y1="677.5" x2="790.5" y2="714" stroke="#4a4a4a" stroke-width="1" /><line x1="790" y1="639.5" x2="837" y2="639.5" stroke="#4a4a4a" stroke-width="1" /><line x1="790" y1="714.5" x2="837" y2="714.5" stroke="#4a4a4a" stroke-width="1" /><path d="M790 641L819.5 659.2A36.5 36.5 0 0 1 790 677.5" stroke="#4a4a4a" stroke-width="1" fill="none"/><path d="M808.2 701.2V680Q808.2 675.9 814.05 675.9Q819.9 675.9 819.9 680V701.2Z" fill="none" stroke="#4a4a4a"/><line x1="808.2" y1="680.5" x2="819.9" y2="680.5" stroke="#4a4a4a" stroke-width="1" /><line x1="826.5" y1="630" x2="826.5" y2="722" stroke="#4a4a4a" stroke-width="1" stroke-dasharray="14 3"/><line x1="830.5" y1="630" x2="830.5" y2="722" stroke="#4a4a4a" stroke-width="1" stroke-dasharray="14 3"/><line x1="808.2" y1="716.5" x2="837" y2="716.5" stroke="#4a4a4a" stroke-width="1" /><line x1="808.2" y1="719.5" x2="837" y2="719.5" stroke="#4a4a4a" stroke-width="1" /><line x1="830.5" y1="714" x2="830.5" y2="722" stroke="#4a4a4a" stroke-width="1" /><line x1="834.5" y1="714" x2="834.5" y2="722" stroke="#4a4a4a" stroke-width="1" /><path d="M811 611A9 9 0 0 1 811 628.4" stroke="#00b4bc" stroke-width="1" fill="none"/><rect x="822.9" y="615.6" width="10.3" height="8.7" rx="1.5" fill="none" stroke="#00b4bc"/><line x1="833.2" y1="620.5" x2="841.5" y2="620.5" stroke="#555" stroke-width="1" /><path d="M823 621L828.2 631" stroke="#555" stroke-width="1" fill="none"/><line x1="792.4" y1="613.5" x2="819.0" y2="613.5" stroke="#555" stroke-width="1" /></g>
<g transform="translate(1683 0) scale(-1 1)"><line x1="686" y1="630.5" x2="751.8" y2="630.5" stroke="#4a4a4a" stroke-width="1" /><line x1="708.4" y1="632.5" x2="751.8" y2="632.5" stroke="#4a4a4a" stroke-width="1" /><line x1="708.4" y1="636.5" x2="751.8" y2="636.5" stroke="#4a4a4a" stroke-width="1" /><line x1="686" y1="639.5" x2="708.4" y2="639.5" stroke="#4a4a4a" stroke-width="1" /><line x1="708.5" y1="630" x2="708.5" y2="722" stroke="#4a4a4a" stroke-width="1" /><line x1="751.5" y1="630" x2="751.5" y2="639.3" stroke="#4a4a4a" stroke-width="1" /><path d="M751.8 639.3Q759 651.5 768.3 651.2L785.8 635.1" stroke="#4a4a4a" stroke-width="1" fill="none"/><path d="M686 678.6H708.4" stroke="#4a4a4a" stroke-width="1" fill="none"/><circle cx="697.2" cy="659.8" r="11" fill="none" stroke="#4a4a4a"/><circle cx="697.2" cy="659.8" r="9.5" fill="none" stroke="#333"/><path d="M689 659.8H698M695 656.5A3.3 3.3 0 0 1 695 663.1" stroke="#4a4a4a" stroke-width="1" fill="none"/><circle cx="693.5" cy="643.2" r="2.5" fill="none" stroke="#4a6a30"/><rect x="687.4" y="680" width="20.2" height="29" rx="2" fill="none" stroke="#4a4a4a"/><rect x="688.6" y="681.5" width="17.8" height="26" rx="1.5" fill="none" stroke="#333"/><circle cx="697" cy="702" r="1.8" fill="none" stroke="#4a4a4a"/><path d="M755.9 683.3L721.5 661.1" stroke="#4a4a4a" stroke-width="1" fill="none"/><path d="M721.5 661.1L736 666.5L733 671Z" stroke="#4a4a4a" stroke-width="1" fill="#4a4a4a"/><line x1="708.4" y1="710.5" x2="786.3" y2="710.5" stroke="#4a4a4a" stroke-width="1" /><line x1="708.4" y1="713.5" x2="786.3" y2="713.5" stroke="#4a4a4a" stroke-width="1" /><line x1="708.4" y1="716.5" x2="786.3" y2="716.5" stroke="#4a4a4a" stroke-width="1" /><line x1="708.4" y1="719.5" x2="786.3" y2="719.5" stroke="#4a4a4a" stroke-width="1" /><line x1="786.3" y1="630.5" x2="837" y2="630.5" stroke="#4a4a4a" stroke-width="1" /><line x1="786.5" y1="630.6" x2="786.5" y2="722" stroke="#4a4a4a" stroke-width="1" /><line x1="790.5" y1="639.6" x2="790.5" y2="641" stroke="#4a4a4a" stroke-width="1" /><line x1="790.5" y1="677.5" x2="790.5" y2="714" stroke="#4a4a4a" stroke-width="1" /><line x1="790" y1="639.5" x2="837" y2="639.5" stroke="#4a4a4a" stroke-width="1" /><line x1="790" y1="714.5" x2="837" y2="714.5" stroke="#4a4a4a" stroke-width="1" /><path d="M790 641L819.5 659.2A36.5 36.5 0 0 1 790 677.5" stroke="#4a4a4a" stroke-width="1" fill="none"/><path d="M808.2 701.2V680Q808.2 675.9 814.05 675.9Q819.9 675.9 819.9 680V701.2Z" fill="none" stroke="#4a4a4a"/><line x1="808.2" y1="680.5" x2="819.9" y2="680.5" stroke="#4a4a4a" stroke-width="1" /><line x1="826.5" y1="630" x2="826.5" y2="722" stroke="#4a4a4a" stroke-width="1" stroke-dasharray="14 3"/><line x1="830.5" y1="630" x2="830.5" y2="722" stroke="#4a4a4a" stroke-width="1" stroke-dasharray="14 3"/><line x1="808.2" y1="716.5" x2="837" y2="716.5" stroke="#4a4a4a" stroke-width="1" /><line x1="808.2" y1="719.5" x2="837" y2="719.5" stroke="#4a4a4a" stroke-width="1" /><line x1="830.5" y1="714" x2="830.5" y2="722" stroke="#4a4a4a" stroke-width="1" /><line x1="834.5" y1="714" x2="834.5" y2="722" stroke="#4a4a4a" stroke-width="1" /><path d="M811 611A9 9 0 0 1 811 628.4" stroke="#00b4bc" stroke-width="1" fill="none"/><rect x="822.9" y="615.6" width="10.3" height="8.7" rx="1.5" fill="none" stroke="#00b4bc"/><line x1="833.2" y1="620.5" x2="841.5" y2="620.5" stroke="#555" stroke-width="1" /><path d="M823 621L828.2 631" stroke="#555" stroke-width="1" fill="none"/><line x1="792.4" y1="613.5" x2="819.0" y2="613.5" stroke="#555" stroke-width="1" /></g>
<text x="795.8" y="611" font-size="13.72" fill="#666" textLength="22.4" lengthAdjust="spacingAndGlyphs" font-family="Liberation Sans" stroke="#000" stroke-width="0.55">KD1</text>
<text x="870" y="611" font-size="13.72" fill="#666" textLength="22.4" lengthAdjust="spacingAndGlyphs" font-family="Liberation Sans" stroke="#000" stroke-width="0.55">KD1</text>
<g><line x1="1006" y1="630.5" x2="1071.8" y2="630.5" stroke="#4a4a4a" stroke-width="1" /><line x1="1028.4" y1="632.5" x2="1071.8" y2="632.5" stroke="#4a4a4a" stroke-width="1" /><line x1="1028.4" y1="636.5" x2="1071.8" y2="636.5" stroke="#4a4a4a" stroke-width="1" /><line x1="1006" y1="639.5" x2="1028.4" y2="639.5" stroke="#4a4a4a" stroke-width="1" /><line x1="1028.5" y1="630" x2="1028.5" y2="722" stroke="#4a4a4a" stroke-width="1" /><line x1="1071.5" y1="630" x2="1071.5" y2="639.3" stroke="#4a4a4a" stroke-width="1" /><path d="M1071.8 639.3Q1079 651.5 1088.3 651.2L1105.8 635.1" stroke="#4a4a4a" stroke-width="1" fill="none"/><path d="M1006 678.6H1028.4" stroke="#4a4a4a" stroke-width="1" fill="none"/><circle cx="1017.2" cy="659.8" r="11" fill="none" stroke="#4a4a4a"/><circle cx="1017.2" cy="659.8" r="9.5" fill="none" stroke="#333"/><path d="M1009 659.8H1018M1015 656.5A3.3 3.3 0 0 1 1015 663.1" stroke="#4a4a4a" stroke-width="1" fill="none"/><circle cx="1013.5" cy="643.2" r="2.5" fill="none" stroke="#4a6a30"/><rect x="1007.4" y="680" width="20.2" height="29" rx="2" fill="none" stroke="#4a4a4a"/><rect x="1008.6" y="681.5" width="17.8" height="26" rx="1.5" fill="none" stroke="#333"/><circle cx="1017" cy="702" r="1.8" fill="none" stroke="#4a4a4a"/><path d="M1075.9 683.3L1041.5 661.1" stroke="#4a4a4a" stroke-width="1" fill="none"/><path d="M1041.5 661.1L1056 666.5L1053 671Z" stroke="#4a4a4a" stroke-width="1" fill="#4a4a4a"/><line x1="1028.4" y1="710.5" x2="1106.3" y2="710.5" stroke="#4a4a4a" stroke-width="1" /><line x1="1028.4" y1="713.5" x2="1106.3" y2="713.5" stroke="#4a4a4a" stroke-width="1" /><line x1="1028.4" y1="716.5" x2="1106.3" y2="716.5" stroke="#4a4a4a" stroke-width="1" /><line x1="1028.4" y1="719.5" x2="1106.3" y2="719.5" stroke="#4a4a4a" stroke-width="1" /><line x1="1106.3" y1="630.5" x2="1157" y2="630.5" stroke="#4a4a4a" stroke-width="1" /><line x1="1106.5" y1="630.6" x2="1106.5" y2="722" stroke="#4a4a4a" stroke-width="1" /><line x1="1110.5" y1="639.6" x2="1110.5" y2="641" stroke="#4a4a4a" stroke-width="1" /><line x1="1110.5" y1="677.5" x2="1110.5" y2="714" stroke="#4a4a4a" stroke-width="1" /><line x1="1110" y1="639.5" x2="1157" y2="639.5" stroke="#4a4a4a" stroke-width="1" /><line x1="1110" y1="714.5" x2="1157" y2="714.5" stroke="#4a4a4a" stroke-width="1" /><path d="M1110 641L1139.5 659.2A36.5 36.5 0 0 1 1110 677.5" stroke="#4a4a4a" stroke-width="1" fill="none"/><path d="M1128.2 701.2V680Q1128.2 675.9 1134.05 675.9Q1139.9 675.9 1139.9 680V701.2Z" fill="none" stroke="#4a4a4a"/><line x1="1128.2" y1="680.5" x2="1139.9" y2="680.5" stroke="#4a4a4a" stroke-width="1" /><line x1="1146.5" y1="630" x2="1146.5" y2="722" stroke="#4a4a4a" stroke-width="1" stroke-dasharray="14 3"/><line x1="1150.5" y1="630" x2="1150.5" y2="722" stroke="#4a4a4a" stroke-width="1" stroke-dasharray="14 3"/><line x1="1128.2" y1="716.5" x2="1157" y2="716.5" stroke="#4a4a4a" stroke-width="1" /><line x1="1128.2" y1="719.5" x2="1157" y2="719.5" stroke="#4a4a4a" stroke-width="1" /><line x1="1150.5" y1="714" x2="1150.5" y2="722" stroke="#4a4a4a" stroke-width="1" /><line x1="1154.5" y1="714" x2="1154.5" y2="722" stroke="#4a4a4a" stroke-width="1" /><path d="M1131 611A9 9 0 0 1 1131 628.4" stroke="#00b4bc" stroke-width="1" fill="none"/><rect x="1142.9" y="615.6" width="10.3" height="8.7" rx="1.5" fill="none" stroke="#00b4bc"/><line x1="1153.2" y1="620.5" x2="1161.5" y2="620.5" stroke="#555" stroke-width="1" /><path d="M1143 621L1148.2 631" stroke="#555" stroke-width="1" fill="none"/><line x1="1112.3999999999999" y1="613.5" x2="1139.0" y2="613.5" stroke="#555" stroke-width="1" /></g>
<g transform="translate(2323 0) scale(-1 1)"><line x1="1006" y1="630.5" x2="1071.8" y2="630.5" stroke="#4a4a4a" stroke-width="1" /><line x1="1028.4" y1="632.5" x2="1071.8" y2="632.5" stroke="#4a4a4a" stroke-width="1" /><line x1="1028.4" y1="636.5" x2="1071.8" y2="636.5" stroke="#4a4a4a" stroke-width="1" /><line x1="1006" y1="639.5" x2="1028.4" y2="639.5" stroke="#4a4a4a" stroke-width="1" /><line x1="1028.5" y1="630" x2="1028.5" y2="722" stroke="#4a4a4a" stroke-width="1" /><line x1="1071.5" y1="630" x2="1071.5" y2="639.3" stroke="#4a4a4a" stroke-width="1" /><path d="M1071.8 639.3Q1079 651.5 1088.3 651.2L1105.8 635.1" stroke="#4a4a4a" stroke-width="1" fill="none"/><path d="M1006 678.6H1028.4" stroke="#4a4a4a" stroke-width="1" fill="none"/><circle cx="1017.2" cy="659.8" r="11" fill="none" stroke="#4a4a4a"/><circle cx="1017.2" cy="659.8" r="9.5" fill="none" stroke="#333"/><path d="M1009 659.8H1018M1015 656.5A3.3 3.3 0 0 1 1015 663.1" stroke="#4a4a4a" stroke-width="1" fill="none"/><circle cx="1013.5" cy="643.2" r="2.5" fill="none" stroke="#4a6a30"/><rect x="1007.4" y="680" width="20.2" height="29" rx="2" fill="none" stroke="#4a4a4a"/><rect x="1008.6" y="681.5" width="17.8" height="26" rx="1.5" fill="none" stroke="#333"/><circle cx="1017" cy="702" r="1.8" fill="none" stroke="#4a4a4a"/><path d="M1075.9 683.3L1041.5 661.1" stroke="#4a4a4a" stroke-width="1" fill="none"/><path d="M1041.5 661.1L1056 666.5L1053 671Z" stroke="#4a4a4a" stroke-width="1" fill="#4a4a4a"/><line x1="1028.4" y1="710.5" x2="1106.3" y2="710.5" stroke="#4a4a4a" stroke-width="1" /><line x1="1028.4" y1="713.5" x2="1106.3" y2="713.5" stroke="#4a4a4a" stroke-width="1" /><line x1="1028.4" y1="716.5" x2="1106.3" y2="716.5" stroke="#4a4a4a" stroke-width="1" /><line x1="1028.4" y1="719.5" x2="1106.3" y2="719.5" stroke="#4a4a4a" stroke-width="1" /><line x1="1106.3" y1="630.5" x2="1157" y2="630.5" stroke="#4a4a4a" stroke-width="1" /><line x1="1106.5" y1="630.6" x2="1106.5" y2="722" stroke="#4a4a4a" stroke-width="1" /><line x1="1110.5" y1="639.6" x2="1110.5" y2="641" stroke="#4a4a4a" stroke-width="1" /><line x1="1110.5" y1="677.5" x2="1110.5" y2="714" stroke="#4a4a4a" stroke-width="1" /><line x1="1110" y1="639.5" x2="1157" y2="639.5" stroke="#4a4a4a" stroke-width="1" /><line x1="1110" y1="714.5" x2="1157" y2="714.5" stroke="#4a4a4a" stroke-width="1" /><path d="M1110 641L1139.5 659.2A36.5 36.5 0 0 1 1110 677.5" stroke="#4a4a4a" stroke-width="1" fill="none"/><path d="M1128.2 701.2V680Q1128.2 675.9 1134.05 675.9Q1139.9 675.9 1139.9 680V701.2Z" fill="none" stroke="#4a4a4a"/><line x1="1128.2" y1="680.5" x2="1139.9" y2="680.5" stroke="#4a4a4a" stroke-width="1" /><line x1="1146.5" y1="630" x2="1146.5" y2="722" stroke="#4a4a4a" stroke-width="1" stroke-dasharray="14 3"/><line x1="1150.5" y1="630" x2="1150.5" y2="722" stroke="#4a4a4a" stroke-width="1" stroke-dasharray="14 3"/><line x1="1128.2" y1="716.5" x2="1157" y2="716.5" stroke="#4a4a4a" stroke-width="1" /><line x1="1128.2" y1="719.5" x2="1157" y2="719.5" stroke="#4a4a4a" stroke-width="1" /><line x1="1150.5" y1="714" x2="1150.5" y2="722" stroke="#4a4a4a" stroke-width="1" /><line x1="1154.5" y1="714" x2="1154.5" y2="722" stroke="#4a4a4a" stroke-width="1" /><path d="M1131 611A9 9 0 0 1 1131 628.4" stroke="#00b4bc" stroke-width="1" fill="none"/><rect x="1142.9" y="615.6" width="10.3" height="8.7" rx="1.5" fill="none" stroke="#00b4bc"/><line x1="1153.2" y1="620.5" x2="1161.5" y2="620.5" stroke="#555" stroke-width="1" /><path d="M1143 621L1148.2 631" stroke="#555" stroke-width="1" fill="none"/><line x1="1112.3999999999999" y1="613.5" x2="1139.0" y2="613.5" stroke="#555" stroke-width="1" /></g>
<text x="1115.8" y="611" font-size="13.72" fill="#666" textLength="22.4" lengthAdjust="spacingAndGlyphs" font-family="Liberation Sans" stroke="#000" stroke-width="0.55">KD1</text>
<text x="1190" y="611" font-size="13.72" fill="#666" textLength="22.4" lengthAdjust="spacingAndGlyphs" font-family="Liberation Sans" stroke="#000" stroke-width="0.55">KD1</text>
<line x1="1166" y1="92.5" x2="1219" y2="92.5" stroke="#4a4a4a" stroke-width="1" />
<line x1="1166" y1="131.5" x2="1219" y2="131.5" stroke="#4a4a4a" stroke-width="1" />
<line x1="1166" y1="93.5" x2="1219" y2="93.5" stroke="#4a4a4a" stroke-width="1" />
<line x1="1219.5" y1="72" x2="1219.5" y2="86" stroke="#4a4a4a" stroke-width="1" />
<line x1="1219.5" y1="98.6" x2="1219.5" y2="99" stroke="#4a4a4a" stroke-width="1" />
<line x1="1219.5" y1="125.6" x2="1219.5" y2="131.8" stroke="#4a4a4a" stroke-width="1" />
<line x1="1221.5" y1="86" x2="1221.5" y2="98.6" stroke="#4a4a4a" stroke-width="1" />
<line x1="1221.5" y1="125.6" x2="1221.5" y2="131.8" stroke="#4a4a4a" stroke-width="1" />
<path d="M1219.5 86A24 24 0 0 0 1242.6 72" stroke="#4a4a4a" stroke-width="1" fill="none" />
<path d="M1219.5 98.6L1241.6 112.2A26 26 0 0 1 1219.5 125.6" stroke="#4a4a4a" stroke-width="1" fill="none" />
<path d="M1179.5 105.5H1200Q1206 105.5 1206 110.5V114.0Q1206 119.0 1200 119.0H1179.5Z" stroke="#4a4a4a" stroke-width="1" fill="none" />
<line x1="1181.5" y1="107.0" x2="1181.5" y2="117.5" stroke="#4a4a4a" stroke-width="1" />
<circle cx="1195.4" cy="112.2" r="1.3" fill="none" stroke="#4a4a4a"/>
<path d="M1179.5 45H1200Q1206 45 1206 50V53.5Q1206 58.5 1200 58.5H1179.5Z" stroke="#4a4a4a" stroke-width="1" fill="none" />
<line x1="1181.5" y1="46.5" x2="1181.5" y2="57" stroke="#4a4a4a" stroke-width="1" />
<circle cx="1195.4" cy="51.7" r="1.3" fill="none" stroke="#4a4a4a"/>
<rect x="1166.5" y="139.5" width="50.5" height="4.7" stroke="#4a4a4a" stroke-width="1" fill="none" />
<line x1="1232" y1="141.5" x2="1269" y2="141.5" stroke="#4a4a4a" stroke-width="1" />
<rect x="1166.5" y="144.5" width="29" height="139.3" stroke="#4a4a4a" stroke-width="1" fill="none" />
<rect x="1170.5" y="148.5" width="18.3" height="131" stroke="#4a4a4a" stroke-width="1" fill="none" />
<line x1="1167.7" y1="167.5" x2="1180.4" y2="167.5" stroke="#4a4a4a" stroke-width="1" />
<line x1="1180.5" y1="163" x2="1180.5" y2="171" stroke="#4a4a4a" stroke-width="1" />
<line x1="1167.7" y1="197.5" x2="1180.4" y2="197.5" stroke="#4a4a4a" stroke-width="1" />
<line x1="1180.5" y1="193.7" x2="1180.5" y2="201.7" stroke="#4a4a4a" stroke-width="1" />
<line x1="1167.7" y1="229.5" x2="1180.4" y2="229.5" stroke="#4a4a4a" stroke-width="1" />
<line x1="1180.5" y1="225.4" x2="1180.5" y2="233.4" stroke="#4a4a4a" stroke-width="1" />
<line x1="1167.7" y1="260.5" x2="1180.4" y2="260.5" stroke="#4a4a4a" stroke-width="1" />
<line x1="1180.5" y1="256.5" x2="1180.5" y2="264.5" stroke="#4a4a4a" stroke-width="1" />
<text transform="translate(1237 212) scale(0.55 1)" fill="#666666" font-size="16" text-anchor="middle" stroke="#000" stroke-width="0.35">盥洗室</text>
<line x1="1166" y1="283.5" x2="1269" y2="283.5" stroke="#4a4a4a" stroke-width="1" />
<line x1="1201.5" y1="283.8" x2="1201.5" y2="292.5" stroke="#4a4a4a" stroke-width="1" />
<line x1="1157.5" y1="292.5" x2="1201.5" y2="292.5" stroke="#4a4a4a" stroke-width="1" />
<line x1="1258.5" y1="72" x2="1258.5" y2="292" stroke="#820000" stroke-width="1" />
<rect x="179.5" y="537.5" width="17.5" height="34.5" stroke="#00b4bc" stroke-width="1" fill="none" />
<text x="180" y="556" font-size="15.09" fill="#00b4bc" textLength="15.5" lengthAdjust="spacingAndGlyphs" font-family="Liberation Sans" stroke="#000" stroke-width="0.55">JX1</text>
<line x1="0" y1="567.5" x2="178.6" y2="567.5" stroke="#820000" stroke-width="1" />
<line x1="36.8" y1="576.5" x2="179.2" y2="576.5" stroke="#b04a10" stroke-width="1" />
<path d="M33 580L41 573M175 580L183 573" stroke="#b04a10" stroke-width="1" fill="none" />
<text x="95" y="575.5" font-size="14.40" fill="#c05010" textLength="25" lengthAdjust="spacingAndGlyphs" font-family="Liberation Sans" stroke="#000" stroke-width="0.55">3200</text>
<text transform="translate(98.4 703.6) scale(0.55 1)" fill="#666666" font-size="17" text-anchor="middle" stroke="#000" stroke-width="0.35">阳台</text>
<text transform="translate(304.6 703.6) scale(0.55 1)" fill="#666666" font-size="17" text-anchor="middle" stroke="#000" stroke-width="0.35">阳台</text>
<text transform="translate(418.4 703.6) scale(0.55 1)" fill="#666666" font-size="17" text-anchor="middle" stroke="#000" stroke-width="0.35">阳台</text>
<text transform="translate(624.6 703.6) scale(0.55 1)" fill="#666666" font-size="17" text-anchor="middle" stroke="#000" stroke-width="0.35">阳台</text>
<text transform="translate(738.4 703.6) scale(0.55 1)" fill="#666666" font-size="17" text-anchor="middle" stroke="#000" stroke-width="0.35">阳台</text>
<text transform="translate(944.6 703.6) scale(0.55 1)" fill="#666666" font-size="17" text-anchor="middle" stroke="#000" stroke-width="0.35">阳台</text>
<text transform="translate(1058.4 703.6) scale(0.55 1)" fill="#666666" font-size="17" text-anchor="middle" stroke="#000" stroke-width="0.35">阳台</text>
<text transform="translate(1264.6 703.6) scale(0.55 1)" fill="#666666" font-size="17" text-anchor="middle" stroke="#000" stroke-width="0.35">阳台</text>
<line x1="22.5" y1="72" x2="22.5" y2="80" stroke="#4a4a4a" stroke-width="1" />
<line x1="25.5" y1="72" x2="25.5" y2="80" stroke="#4a4a4a" stroke-width="1" />
<line x1="37.5" y1="72" x2="37.5" y2="80" stroke="#4a4a4a" stroke-width="1" />
<line x1="40.5" y1="72" x2="40.5" y2="80" stroke="#4a4a4a" stroke-width="1" />
<line x1="46.5" y1="72" x2="46.5" y2="80" stroke="#4a4a4a" stroke-width="1" />
<text x="475.8" y="77" font-size="13.72" fill="#555" textLength="22.4" lengthAdjust="spacingAndGlyphs" font-family="Liberation Sans" stroke="#000" stroke-width="0.55">KD1</text>
<line x1="472.40000000000003" y1="78.5" x2="499.0" y2="78.5" stroke="#555" stroke-width="1" />
<text x="550" y="77" font-size="13.72" fill="#555" textLength="22.4" lengthAdjust="spacingAndGlyphs" font-family="Liberation Sans" stroke="#000" stroke-width="0.55">KD1</text>
<line x1="546.6" y1="78.5" x2="573.2" y2="78.5" stroke="#555" stroke-width="1" />
<text x="795.8" y="77" font-size="13.72" fill="#555" textLength="22.4" lengthAdjust="spacingAndGlyphs" font-family="Liberation Sans" stroke="#000" stroke-width="0.55">KD1</text>
<line x1="792.4" y1="78.5" x2="819.0" y2="78.5" stroke="#555" stroke-width="1" />
<text x="870" y="77" font-size="13.72" fill="#555" textLength="22.4" lengthAdjust="spacingAndGlyphs" font-family="Liberation Sans" stroke="#000" stroke-width="0.55">KD1</text>
<line x1="866.6" y1="78.5" x2="893.2" y2="78.5" stroke="#555" stroke-width="1" />
<text x="1115.8" y="77" font-size="13.72" fill="#555" textLength="22.4" lengthAdjust="spacingAndGlyphs" font-family="Liberation Sans" stroke="#000" stroke-width="0.55">KD1</text>
<line x1="1112.3999999999999" y1="78.5" x2="1139.0" y2="78.5" stroke="#555" stroke-width="1" />
<text x="1190" y="77" font-size="13.72" fill="#555" textLength="22.4" lengthAdjust="spacingAndGlyphs" font-family="Liberation Sans" stroke="#000" stroke-width="0.55">KD1</text>
<line x1="1186.6" y1="78.5" x2="1213.2" y2="78.5" stroke="#555" stroke-width="1" />
<line x1="518" y1="86.5" x2="526" y2="86.5" stroke="#5a0000" stroke-width="1" />
<line x1="518" y1="212.5" x2="526" y2="212.5" stroke="#5a0000" stroke-width="1" />
<line x1="678" y1="86.5" x2="686" y2="86.5" stroke="#5a0000" stroke-width="1" />
<line x1="678" y1="212.5" x2="686" y2="212.5" stroke="#5a0000" stroke-width="1" />
<line x1="838" y1="86.5" x2="846" y2="86.5" stroke="#5a0000" stroke-width="1" />
<line x1="838" y1="212.5" x2="846" y2="212.5" stroke="#5a0000" stroke-width="1" />
<line x1="998" y1="86.5" x2="1006" y2="86.5" stroke="#5a0000" stroke-width="1" />
<line x1="998" y1="212.5" x2="1006" y2="212.5" stroke="#5a0000" stroke-width="1" />
<line x1="198" y1="470.5" x2="206" y2="470.5" stroke="#5a0000" stroke-width="1" />
<line x1="198" y1="596.5" x2="206" y2="596.5" stroke="#5a0000" stroke-width="1" />
<line x1="358" y1="470.5" x2="366" y2="470.5" stroke="#5a0000" stroke-width="1" />
<line x1="358" y1="596.5" x2="366" y2="596.5" stroke="#5a0000" stroke-width="1" />
<line x1="518" y1="470.5" x2="526" y2="470.5" stroke="#5a0000" stroke-width="1" />
<line x1="518" y1="596.5" x2="526" y2="596.5" stroke="#5a0000" stroke-width="1" />
<line x1="678" y1="470.5" x2="686" y2="470.5" stroke="#5a0000" stroke-width="1" />
<line x1="678" y1="596.5" x2="686" y2="596.5" stroke="#5a0000" stroke-width="1" />
<line x1="838" y1="470.5" x2="846" y2="470.5" stroke="#5a0000" stroke-width="1" />
<line x1="838" y1="596.5" x2="846" y2="596.5" stroke="#5a0000" stroke-width="1" />
<line x1="998" y1="470.5" x2="1006" y2="470.5" stroke="#5a0000" stroke-width="1" />
<line x1="998" y1="596.5" x2="1006" y2="596.5" stroke="#5a0000" stroke-width="1" />
<line x1="1158" y1="470.5" x2="1166" y2="470.5" stroke="#5a0000" stroke-width="1" />
<line x1="1158" y1="596.5" x2="1166" y2="596.5" stroke="#5a0000" stroke-width="1" />
<text x="245" y="627" font-size="17.83" fill="#00b000" textLength="14" lengthAdjust="spacingAndGlyphs" font-family="Liberation Sans" stroke="#000" stroke-width="0.55">W1</text>
<text x="558" y="627" font-size="17.83" fill="#00b000" textLength="16" lengthAdjust="spacingAndGlyphs" font-family="Liberation Sans" stroke="#000" stroke-width="0.55">W2</text>
<text x="884" y="627" font-size="17.83" fill="#00b000" textLength="16" lengthAdjust="spacingAndGlyphs" font-family="Liberation Sans" stroke="#000" stroke-width="0.55">W3</text>
<text x="1204" y="627" font-size="17.83" fill="#00b000" textLength="16" lengthAdjust="spacingAndGlyphs" font-family="Liberation Sans" stroke="#000" stroke-width="0.55">W4</text>
<path d="M160.5 556V364.5H1269M167.5 556V370.5H1269" stroke="#1a56a8" stroke-width="1" fill="none"/>
<path d="M161.5 556V365.5H1269" stroke="#8c0000" stroke-width="1" fill="none"/>
<path d="M165.5 556V369.5H1269" stroke="#4a0000" stroke-width="1" fill="none"/>
<path d="M178 555H163.5V367H1135.5V376" stroke="#e86400" stroke-width="2" fill="none"/>
<path d="M178 551.5H167.5V556M160.5 556V559.5H178" stroke="#1a56a8" stroke-width="1" fill="none"/>
<text x="141.6" y="360.3" font-size="16.19" fill="#00b000" textLength="20.5" lengthAdjust="spacingAndGlyphs" font-family="Liberation Sans" stroke="#000" stroke-width="0.55">WX1</text>
<text x="242" y="388.8" font-size="16.19" fill="#00b000" textLength="22" lengthAdjust="spacingAndGlyphs" font-family="Liberation Sans" stroke="#000" stroke-width="0.55">WX2</text>
<text x="500" y="351.8" font-size="16.19" fill="#00b000" textLength="22" lengthAdjust="spacingAndGlyphs" font-family="Liberation Sans" stroke="#000" stroke-width="0.55">WX3</text>
<text x="498" y="388.8" font-size="16.19" fill="#00b000" textLength="22" lengthAdjust="spacingAndGlyphs" font-family="Liberation Sans" stroke="#000" stroke-width="0.55">WX4</text>
<text x="815" y="351.8" font-size="16.19" fill="#00b000" textLength="22" lengthAdjust="spacingAndGlyphs" font-family="Liberation Sans" stroke="#000" stroke-width="0.55">WX5</text>
<text x="813" y="388.8" font-size="16.19" fill="#00b000" textLength="22" lengthAdjust="spacingAndGlyphs" font-family="Liberation Sans" stroke="#000" stroke-width="0.55">WX6</text>
<text x="1038" y="351.8" font-size="16.19" fill="#00b000" textLength="20" lengthAdjust="spacingAndGlyphs" font-family="Liberation Sans" stroke="#000" stroke-width="0.55">W11</text>
<text x="1165.6" y="351.8" font-size="16.19" fill="#00b000" textLength="21.7" lengthAdjust="spacingAndGlyphs" font-family="Liberation Sans" stroke="#000" stroke-width="0.55">WX7</text>
<text x="1250" y="389.8" font-size="16.19" fill="#00b000" textLength="22" lengthAdjust="spacingAndGlyphs" font-family="Liberation Sans" stroke="#000" stroke-width="0.55">W12</text>
<text x="1262" y="351.8" font-size="16.19" fill="#00b000" textLength="12" lengthAdjust="spacingAndGlyphs" font-family="Liberation Sans" stroke="#000" stroke-width="0.55">W</text>
<text x="1108.8" y="344.8" font-size="17.28" fill="#707070" textLength="22" lengthAdjust="spacingAndGlyphs" font-family="Liberation Sans" stroke="#000" stroke-width="0.55">1AL1</text>
<text x="1127" y="315.5" font-size="16.19" fill="#808080" textLength="83" lengthAdjust="spacingAndGlyphs" font-family="Liberation Sans" stroke="#000" stroke-width="0.55">YJV-4X35+16-SC40</text>
<text x="922.8" y="354.4" font-size="19.48" fill="#b84c14" textLength="50.7" lengthAdjust="spacingAndGlyphs" font-family="Liberation Sans" stroke="#000" stroke-width="0.8">26667</text>
<path d="M917.8 357.8H985.4L1134.4 376" stroke="#a04010" stroke-width="1" fill="none" />
<path d="M1104.3 349.4H1146.6V376.8" stroke="#007c00" stroke-width="1" fill="none" />
<path d="M1157.1 383.4V324.4H1247.4" stroke="#007c00" stroke-width="1" fill="none" />
<rect x="1118.5" y="377" width="36" height="17.5" fill="#00656a" stroke="#00c8d0" stroke-width="1"/>
<clipPath id="hc"><rect x="1118.5" y="377" width="36" height="17.5"/></clipPath><g clip-path="url(#hc)">
<line x1="1100.5" y1="394.5" x2="1118.0" y2="377" stroke="#00a0a8" stroke-width=".7"/>
<line x1="1105.0" y1="394.5" x2="1122.5" y2="377" stroke="#00a0a8" stroke-width=".7"/>
<line x1="1109.5" y1="394.5" x2="1127.0" y2="377" stroke="#00a0a8" stroke-width=".7"/>
<line x1="1114.0" y1="394.5" x2="1131.5" y2="377" stroke="#00a0a8" stroke-width=".7"/>
<line x1="1118.5" y1="394.5" x2="1136.0" y2="377" stroke="#00a0a8" stroke-width=".7"/>
<line x1="1123.0" y1="394.5" x2="1140.5" y2="377" stroke="#00a0a8" stroke-width=".7"/>
<line x1="1127.5" y1="394.5" x2="1145.0" y2="377" stroke="#00a0a8" stroke-width=".7"/>
<line x1="1132.0" y1="394.5" x2="1149.5" y2="377" stroke="#00a0a8" stroke-width=".7"/>
<line x1="1136.5" y1="394.5" x2="1154.0" y2="377" stroke="#00a0a8" stroke-width=".7"/>
<line x1="1141.0" y1="394.5" x2="1158.5" y2="377" stroke="#00a0a8" stroke-width=".7"/>
<line x1="1145.5" y1="394.5" x2="1163.0" y2="377" stroke="#00a0a8" stroke-width=".7"/>
<line x1="1150.0" y1="394.5" x2="1167.5" y2="377" stroke="#00a0a8" stroke-width=".7"/>
<line x1="1154.5" y1="394.5" x2="1172.0" y2="377" stroke="#00a0a8" stroke-width=".7"/>
</g>
<rect x="1154.5" y="370" width="20" height="30" fill="#000" opacity="0"/>
<path d="M1154.5 387.1L1163 378.5" stroke="#00b4bc" stroke-width="1" fill="none" />
<path d="M1161.5 377L1171 370.5L1165.5 381Z" stroke="#00b4bc" stroke-width="0.8" fill="#00b4bc" />
<text x="906" y="211" font-size="16.46" fill="#6a6a6a" textLength="36" lengthAdjust="spacingAndGlyphs" font-family="Liberation Sans" stroke="#000" stroke-width="0.55">±0.000</text>
<line x1="880" y1="216.5" x2="950" y2="216.5" stroke="#5a5a5a" stroke-width="1" />
<path d="M885 216L893 230L906 216" stroke="#5a5a5a" stroke-width="1" fill="none" />
<text x="978.6" y="317.4" font-size="16.46" fill="#6a6a6a" textLength="35.4" lengthAdjust="spacingAndGlyphs" font-family="Liberation Sans" stroke="#000" stroke-width="0.55">±0.000</text>
<line x1="953" y1="323.5" x2="1024" y2="323.5" stroke="#5a5a5a" stroke-width="1" />
<path d="M958 323.3L967.8 335.8L980.8 323.3" stroke="#5a5a5a" stroke-width="1" fill="none" />
<text x="912" y="470" font-size="16.46" fill="#6a6a6a" textLength="36" lengthAdjust="spacingAndGlyphs" font-family="Liberation Sans" stroke="#000" stroke-width="0.55">±0.000</text>
<line x1="888" y1="473.5" x2="958" y2="473.5" stroke="#5a5a5a" stroke-width="1" />
<path d="M893 473L900 488L913 473" stroke="#5a5a5a" stroke-width="1" fill="none" />
<text transform="translate(430 177) scale(0.62 1)" fill="#666666" font-size="15" text-anchor="middle" stroke="#000" stroke-width="0.35">宿舍</text>
<text transform="translate(590 177) scale(0.62 1)" fill="#666666" font-size="15" text-anchor="middle" stroke="#000" stroke-width="0.35">宿舍</text>
<text transform="translate(750 177) scale(0.62 1)" fill="#666666" font-size="15" text-anchor="middle" stroke="#000" stroke-width="0.35">宿舍</text>
<text transform="translate(910 177) scale(0.62 1)" fill="#666666" font-size="15" text-anchor="middle" stroke="#000" stroke-width="0.35">宿舍</text>
<text transform="translate(1070 177) scale(0.62 1)" fill="#666666" font-size="15" text-anchor="middle" stroke="#000" stroke-width="0.35">宿舍</text>
<text transform="translate(280 537) scale(0.62 1)" fill="#666666" font-size="15" text-anchor="middle" stroke="#000" stroke-width="0.35">宿舍</text>
<text transform="translate(440 537) scale(0.62 1)" fill="#666666" font-size="15" text-anchor="middle" stroke="#000" stroke-width="0.35">宿舍</text>
<text transform="translate(600 537) scale(0.62 1)" fill="#666666" font-size="15" text-anchor="middle" stroke="#000" stroke-width="0.35">宿舍</text>
<text transform="translate(760 537) scale(0.62 1)" fill="#666666" font-size="15" text-anchor="middle" stroke="#000" stroke-width="0.35">宿舍</text>
<text transform="translate(920 537) scale(0.62 1)" fill="#666666" font-size="15" text-anchor="middle" stroke="#000" stroke-width="0.35">宿舍</text>
<text transform="translate(1080 537) scale(0.62 1)" fill="#666666" font-size="15" text-anchor="middle" stroke="#000" stroke-width="0.35">宿舍</text>
<text transform="translate(1240 537) scale(0.62 1)" fill="#666666" font-size="15" text-anchor="middle" stroke="#000" stroke-width="0.35">宿舍</text>
<text transform="translate(117 537) scale(0.62 1)" fill="#666666" font-size="15" text-anchor="middle" stroke="#000" stroke-width="0.35">管理室</text>
</svg></div>
<div id="panel">
<div class="hd">测量</div><div class="cl">×</div>
<div class="row" style="border-top:none;top:19.00px"><svg style="position:absolute;left:29.2px;top:3px" width="14" height="14" viewBox="0 0 13 13"><path d="M2 2l9 8M1 4l3-3M9 11l3-3" stroke="#3aa5ea" stroke-width="1.1" fill="none"/></svg><span style="position:absolute;left:45.2px;top:0">对齐</span></div>
<div class="row" style="top:38.85px"><svg style="position:absolute;left:29.2px;top:3px" width="14" height="14" viewBox="0 0 13 13"><path d="M1 3v6M12 3v6M1 6h11" stroke="#3aa5ea" stroke-width="1.1" fill="none"/><circle cx="2.5" cy="6" r="1" fill="#3aa5ea"/><circle cx="10.5" cy="6" r="1" fill="#3aa5ea"/></svg><span style="position:absolute;left:45.2px;top:0">线性</span></div>
<div class="row" style="top:58.70px"><svg style="position:absolute;left:29.2px;top:3px" width="14" height="14" viewBox="0 0 13 13"><path d="M2 1l9 4v3H2z" fill="#3aa5ea" opacity=".6"/><path d="M1 10h11M1 8.5v3M12 8.5v3" stroke="#3aa5ea" stroke-width="1.1"/></svg><span style="position:absolute;left:45.2px;top:0">面积</span></div>
<div class="row" style="top:78.55px"><svg style="position:absolute;left:20.4px;top:3px" width="14" height="14" viewBox="0 0 13 13"><rect x="1" y="0.5" width="11" height="7" fill="#3aa5ea" opacity=".6"/><path d="M1 10h11M1 8.5v3M12 8.5v3" stroke="#3aa5ea" stroke-width="1.1"/></svg><span style="position:absolute;left:36.4px;top:0">矩形面积</span></div>
<div class="row" style="top:98.40px"><svg style="position:absolute;left:20.4px;top:3px" width="14" height="14" viewBox="0 0 13 13"><path d="M6 2h6M6 5h6M2 11l4-7" stroke="#3aa5ea" stroke-width="1"/><rect x="1" y="8.5" width="3" height="3" fill="none" stroke="#3aa5ea"/></svg><span style="position:absolute;left:36.4px;top:0">坐标标注</span></div>
<div class="row" style="top:118.25px"><svg style="position:absolute;left:11.6px;top:3px" width="14" height="14" viewBox="0 0 13 13"><text x="6.5" y="5.5" font-size="5.5" text-anchor="middle" fill="#3aa5ea" font-family="Liberation Mono" font-weight="bold">A:B</text><rect x="1" y="7.5" width="11" height="4" fill="none" stroke="#3aa5ea"/></svg><span style="position:absolute;left:27.6px;top:0">设置标注比例</span></div>
<div class="row" style="top:138.10px"><svg style="position:absolute;left:29.2px;top:3px" width="14" height="14" viewBox="0 0 13 13"><path d="M2 12A9 9 0 0 1 11 3M5 12A6 6 0 0 1 11 6" stroke="#c9a255" stroke-width="1.2" fill="none"/></svg><span style="position:absolute;left:45.2px;top:0">弧长</span></div>
<div class="row" style="top:157.95px"><svg style="position:absolute;left:7.2px;top:3px" width="14" height="14" viewBox="0 0 13 13"><path d="M1 4l10 5M6 6.5v5" stroke="#c9a255" stroke-width="1.2" fill="none"/><circle cx="2" cy="4" r="1.2" fill="#c9a255"/></svg><span style="position:absolute;left:23.2px;top:0">点到直线的距离</span></div>
<div class="row" style="top:177.80px"><svg style="position:absolute;left:20.4px;top:3px" width="14" height="14" viewBox="0 0 13 13"><path d="M4 1L2 6l3 5h7" stroke="#c9a255" stroke-width="1.2" fill="none"/></svg><span style="position:absolute;left:36.4px;top:0">连续测量</span></div>
<div class="row" style="top:197.65px"><svg style="position:absolute;left:20.4px;top:3px" width="14" height="14" viewBox="0 0 13 13"><rect x="1.5" y="1.5" width="10" height="10" fill="none" stroke="#c9a255" stroke-dasharray="1.5 1"/><path d="M4 5h5M4 8h5" stroke="#c9a255"/></svg><span style="position:absolute;left:36.4px;top:0">批量测量</span></div>
<div class="row" style="top:217.50px"><svg style="position:absolute;left:11.6px;top:3px" width="14" height="14" viewBox="0 0 13 13"><path d="M1 6l4-4h7v8H5z" fill="none" stroke="#c9a255" stroke-width="1.1"/><circle cx="6" cy="7" r="1.5" fill="none" stroke="#c9a255"/></svg><span style="position:absolute;left:27.6px;top:0">查看分段长度</span></div>
<div class="row" style="top:237.35px"><svg style="position:absolute;left:2.8px;top:3px" width="14" height="14" viewBox="0 0 13 13"><path d="M6 1l5 5-5 5-5-5z" fill="none" stroke="#c9a255" stroke-width="1.1"/><path d="M4 6l2 2 4-4" stroke="#c9a255"/></svg><span style="position:absolute;left:18.8px;top:0">修改单个标注属性</span></div>
<div class="row" style="top:257.20px"><svg style="position:absolute;left:11.4px;top:3px" width="14" height="14" viewBox="0 0 13 13"><path d="M1 11l3-9h8l-3 9z" fill="none" stroke="#c9a255" stroke-width="1.1"/><path d="M3 8l5-5M4 11l6-6" stroke="#c9a255"/></svg><span style="position:absolute;left:27.4px;top:0">面积(含弧线)</span></div>
<div class="row" style="top:277.05px"><svg style="position:absolute;left:11.6px;top:3px" width="14" height="14" viewBox="0 0 13 13"><ellipse cx="6.5" cy="6.5" rx="5.5" ry="4.5" fill="none" stroke="#c9a255" stroke-width="1.1"/><path d="M3 8l6-4" stroke="#c9a255"/></svg><span style="position:absolute;left:27.6px;top:0">测量填充面积</span></div>
<div class="row" style="top:296.90px"><svg style="position:absolute;left:16.0px;top:3px" width="14" height="14" viewBox="0 0 13 13"><path d="M1 3h8l3 2v7H4L1 10z" fill="none" stroke="#c9a255" stroke-width="1.1"/></svg><span style="position:absolute;left:32.0px;top:0">计算侧面积</span></div>
<div class="row" style="top:316.75px"><svg style="position:absolute;left:20.4px;top:3px" width="14" height="14" viewBox="0 0 13 13"><path d="M1 1h10v10H1z" fill="none" stroke="#c9a255" stroke-width="1.1"/><rect x="4" y="4" width="5" height="4" fill="none" stroke="#c9a255"/></svg><span style="position:absolute;left:36.4px;top:0">面积偏移</span></div>
<div class="row" style="top:336.60px"><svg style="position:absolute;left:24.8px;top:3px" width="14" height="14" viewBox="0 0 13 13"><path d="M6.5 1l5.5 5.5-5.5 5.5L1 6.5z" fill="#c9a255"/><path d="M3.5 8l6-4" stroke="#fff"/></svg><span style="position:absolute;left:40.8px;top:0">测量圆</span></div>
<div class="row" style="top:356.45px"><svg style="position:absolute;left:29.2px;top:3px" width="14" height="14" viewBox="0 0 13 13"><circle cx="6.5" cy="6.5" r="5.5" fill="none" stroke="#c9a255" stroke-width="1.1"/><path d="M6.5 6.5L3.5 3.5" stroke="#c9a255"/></svg><span style="position:absolute;left:45.2px;top:0">半径</span></div>
<div class="row" style="top:376.30px"><svg style="position:absolute;left:20.4px;top:3px" width="14" height="14" viewBox="0 0 13 13"><path d="M1 11L7 2l5 9z" fill="none" stroke="#c9a255" stroke-width="1.2"/></svg><span style="position:absolute;left:36.4px;top:0">测量角度</span></div>
<div class="row" style="top:396.15px"><svg style="position:absolute;left:20.4px;top:3px" width="14" height="14" viewBox="0 0 13 13"><rect x="1.5" y="1" width="10" height="11" fill="none" stroke="#c9a255" stroke-width="1.1"/><path d="M4 5h5M4 8h5" stroke="#c9a255"/></svg><span style="position:absolute;left:36.4px;top:0">测量统计</span></div>
</div>
<div id="tip">点击左键选择直线的端点或弧线，空格键退回上一点，右键完成</div>
<div id="btool">
<svg style="position:absolute;left:5px;top:5.5px" width="12" height="11" viewBox="0 0 12 11"><g fill="none" stroke="#e8e8e8" stroke-width="1"><circle cx="3.2" cy="2.8" r="2.3"/><circle cx="8.8" cy="2.8" r="2.3"/><circle cx="3.2" cy="8.2" r="2.3"/><circle cx="8.8" cy="8.2" r="2.3"/></g></svg>
<div style="position:absolute;left:22.5px;top:3px;width:1px;height:16px;background:#505050"></div>
<div style="position:absolute;left:25px;top:5px;font-size:9px;color:#d8d8d8;font-family:'Liberation Serif',serif;white-space:nowrap">标注分类</div>
<div style="position:absolute;left:65px;top:0.5px;width:112px;height:20.5px;background:#595959;border:1px solid #3c3c3c"></div>
<div style="position:absolute;left:69px;top:6px;width:10.5px;height:10.5px;background:#e85000;border:1px solid #3a2010"></div>
<div style="position:absolute;left:82px;top:4.5px;font-size:10px;color:#dadada;font-family:'Liberation Serif',serif;white-space:nowrap;letter-spacing:-0.2px">JX1-1AL1,2AL1</div>
<svg style="position:absolute;left:169px;top:9px" width="7" height="5" viewBox="0 0 7 5"><path d="M0 0h7L3.5 4.5z" fill="#eee"/></svg>
<svg style="position:absolute;left:184px;top:4.5px" width="80" height="14" viewBox="0 0 80 14"><g fill="none" stroke="#e6e6e6" stroke-width="1">
<path d="M2.5 3.5V12.5H12.5V10M4.5 3.5V10.5H12.5M6 9L12.5 2.5L14 4L7.5 10.5H6Z"/>
<path d="M28.5 1.5V12.5M23 7H34M26.5 3.5L28.5 1.5L30.5 3.5M26.5 10.5L28.5 12.5L30.5 10.5M25 5L23 7L25 9M32 5L34 7L32 9"/>
<rect x="44.5" y="3.5" width="7" height="9" rx="1.5"/><path d="M47 3.5V2.5Q47 1.5 48 1.5H53.5Q54.5 1.5 54.5 2.5V9.5Q54.5 10.5 53.5 10.5H51.5"/>
<path d="M67.5 11.5V3.5Q67.5 1.5 69.5 1.5H73.5Q75.5 1.5 75.5 3.5V5.5"/><rect x="71.5" y="7" width="6" height="5.5" rx="1"/><path d="M67.5 11.5H71.5M67.5 4.5H75.5"/>
</g></svg>
</div>
<div id="btabs"><svg width="1269" height="15" style="position:absolute;left:0;top:0"><path d="M0 0H53L48.5 14H5.5L2 0Z" fill="#000"/><path d="M52.5 0L56 14H100L104 0" fill="#f8f8f8" stroke="#666" stroke-width="1"/><path d="M0 14.5H1269" stroke="#7c7c7c"/></svg>
<div style="position:absolute;left:18px;top:2px;font-size:9.5px;color:#c8d8ff;font-family:'Liberation Serif',serif">模型</div>
<div style="position:absolute;left:60.5px;top:2px;font-size:9.5px;color:#222;font-family:'Liberation Serif',serif">建筑图纸</div></div>
<div id="status"><div class="t" style="left:5px;font-size:8.6px;letter-spacing:-0.7px;top:5px">x = 95305 y = 537302</div><div class="t" style="left:327px;font-family:'Liberation Serif',serif">模型中的标注比例:1</div><div style="position:absolute;left:215px;top:0;width:1px;height:20px;background:#d8d4cf"></div>
<div style="position:absolute;left:324px;top:0;width:1px;height:20px;background:#d8d4cf"></div>
<div style="position:absolute;left:1180px;top:0;width:1px;height:20px;background:#d8d4cf"></div>
<div style="position:absolute;left:1202px;top:0;width:1px;height:20px;background:#d8d4cf"></div>
<div style="position:absolute;left:1225px;top:0;width:1px;height:20px;background:#d8d4cf"></div>
<div style="position:absolute;left:1247px;top:0;width:1px;height:20px;background:#d8d4cf"></div>
<svg style="position:absolute;left:1186px;top:4px" width="80" height="13" viewBox="0 0 80 13">
<path d="M1.5 1.5H8L11 4.5V11.5H1.5Z" fill="none" stroke="#c9a255" stroke-width="1.2"/><text x="6" y="9" font-size="4.5" text-anchor="middle" fill="#c9a255" font-family="Liberation Sans" font-weight="bold">PDF</text>
<path d="M23.5 4.5V11.5H33.5M25.5 2.5V9.5H34.5V1.5H27" fill="none" stroke="#c9a255" stroke-width="1.1"/><path d="M27 8L30 5L32 6.5" fill="none" stroke="#c9a255"/>
<rect x="45" y="0.5" width="12" height="12" rx="2.5" fill="#1d8ee6"/><path d="M47 6.5H52.5" stroke="#fff" stroke-width="1"/><circle cx="54" cy="6.5" r="1.5" fill="none" stroke="#fff"/><path d="M47 4.5V8.5" stroke="#fff"/>
<rect x="67.5" y="1" width="11" height="11" rx="2" fill="none" stroke="#5cb0ea" stroke-width="1.1"/><path d="M70 9.5H76" stroke="#1d8ee6" stroke-width="1.4"/>
</svg></div>
</body></html>
